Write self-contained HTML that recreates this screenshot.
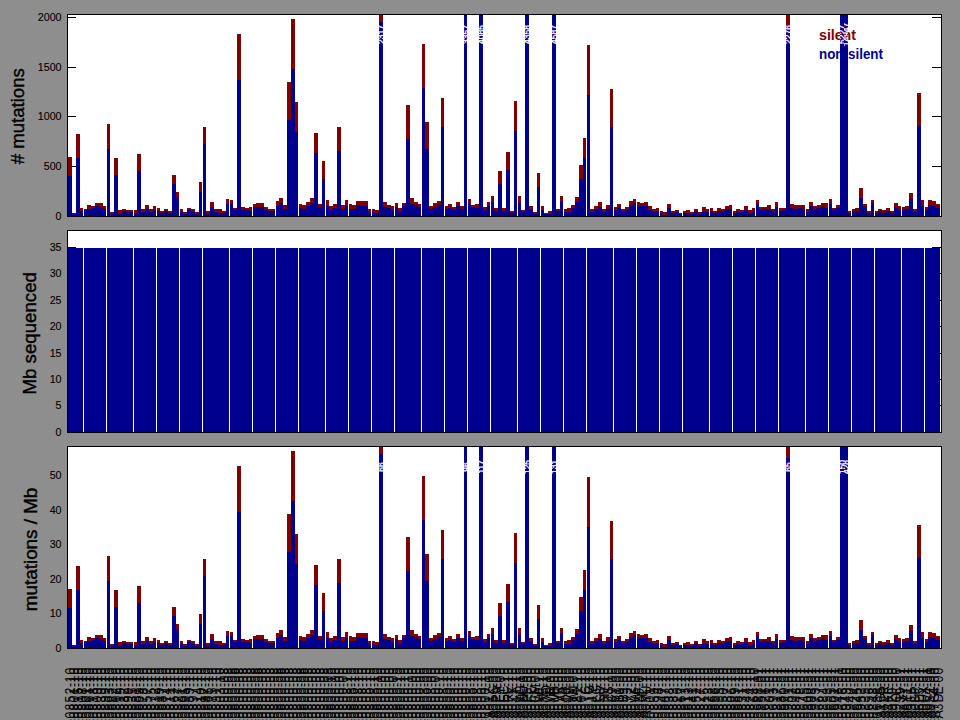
<!DOCTYPE html><html><head><meta charset="utf-8"><title>mutation rates</title>
<style>html,body{margin:0;padding:0;background:#8e8e8e;overflow:hidden}svg{display:block}text{font-family:"Liberation Sans",sans-serif}</style></head><body>
<svg width="960" height="720" viewBox="0 0 960 720">
<rect x="0" y="0" width="960" height="720" fill="#8e8e8e"/>
<g shape-rendering="crispEdges">
<rect x="67" y="14" width="875" height="203" fill="#000"/>
<rect x="68" y="15" width="873" height="201" fill="#fff"/>
<rect x="68" y="17" width="8" height="1" fill="#000"/>
<rect x="932" y="17" width="9" height="1" fill="#000"/>
<rect x="68" y="67" width="8" height="1" fill="#000"/>
<rect x="932" y="67" width="9" height="1" fill="#000"/>
<rect x="68" y="116" width="8" height="1" fill="#000"/>
<rect x="932" y="116" width="9" height="1" fill="#000"/>
<rect x="68" y="166" width="8" height="1" fill="#000"/>
<rect x="932" y="166" width="9" height="1" fill="#000"/>
</g>
<text x="61.5" y="21.3" font-size="10.67" text-anchor="end" fill="#000" stroke="#000" stroke-width="0.1">2000</text>
<text x="61.5" y="71.3" font-size="10.67" text-anchor="end" fill="#000" stroke="#000" stroke-width="0.1">1500</text>
<text x="61.5" y="120.3" font-size="10.67" text-anchor="end" fill="#000" stroke="#000" stroke-width="0.1">1000</text>
<text x="61.5" y="170.3" font-size="10.67" text-anchor="end" fill="#000" stroke="#000" stroke-width="0.1">500</text>
<text x="61.5" y="220.3" font-size="10.67" text-anchor="end" fill="#000" stroke="#000" stroke-width="0.1">0</text>
<text transform="translate(24.3,116.2) rotate(-90)" font-size="18.7" text-anchor="middle" textLength="96.0" lengthAdjust="spacingAndGlyphs" fill="#000" stroke="#000" stroke-width="0.4"># mutations</text>
<g shape-rendering="crispEdges">
<rect x="68" y="176" width="4" height="40" fill="#00008f"/>
<rect x="68" y="157" width="4" height="19" fill="#800000"/>
<rect x="72" y="214" width="4" height="2" fill="#00008f"/>
<rect x="72" y="213" width="4" height="1" fill="#800000"/>
<rect x="76" y="158" width="4" height="58" fill="#00008f"/>
<rect x="76" y="134" width="4" height="24" fill="#800000"/>
<rect x="80" y="211" width="3" height="5" fill="#00008f"/>
<rect x="80" y="208" width="3" height="3" fill="#800000"/>
<rect x="84" y="210" width="3" height="6" fill="#00008f"/>
<rect x="84" y="209" width="3" height="1" fill="#800000"/>
<rect x="87" y="209" width="4" height="7" fill="#00008f"/>
<rect x="87" y="205" width="4" height="4" fill="#800000"/>
<rect x="91" y="208" width="4" height="8" fill="#00008f"/>
<rect x="91" y="206" width="4" height="2" fill="#800000"/>
<rect x="95" y="206" width="4" height="10" fill="#00008f"/>
<rect x="95" y="203" width="4" height="3" fill="#800000"/>
<rect x="99" y="207" width="4" height="9" fill="#00008f"/>
<rect x="99" y="203" width="4" height="4" fill="#800000"/>
<rect x="103" y="209" width="3" height="7" fill="#00008f"/>
<rect x="103" y="206" width="3" height="3" fill="#800000"/>
<rect x="107" y="149" width="3" height="67" fill="#00008f"/>
<rect x="107" y="124" width="3" height="25" fill="#800000"/>
<rect x="110" y="214" width="4" height="2" fill="#00008f"/>
<rect x="110" y="212" width="4" height="2" fill="#800000"/>
<rect x="114" y="175" width="4" height="41" fill="#00008f"/>
<rect x="114" y="158" width="4" height="17" fill="#800000"/>
<rect x="118" y="213" width="4" height="3" fill="#00008f"/>
<rect x="118" y="210" width="4" height="3" fill="#800000"/>
<rect x="122" y="211" width="4" height="5" fill="#00008f"/>
<rect x="122" y="209" width="4" height="2" fill="#800000"/>
<rect x="126" y="212" width="4" height="4" fill="#00008f"/>
<rect x="126" y="210" width="4" height="2" fill="#800000"/>
<rect x="130" y="212" width="3" height="4" fill="#00008f"/>
<rect x="130" y="210" width="3" height="2" fill="#800000"/>
<rect x="134" y="213" width="3" height="3" fill="#00008f"/>
<rect x="134" y="210" width="3" height="3" fill="#800000"/>
<rect x="137" y="171" width="4" height="45" fill="#00008f"/>
<rect x="137" y="154" width="4" height="17" fill="#800000"/>
<rect x="141" y="212" width="4" height="4" fill="#00008f"/>
<rect x="141" y="209" width="4" height="3" fill="#800000"/>
<rect x="145" y="209" width="4" height="7" fill="#00008f"/>
<rect x="145" y="205" width="4" height="4" fill="#800000"/>
<rect x="149" y="212" width="4" height="4" fill="#00008f"/>
<rect x="149" y="209" width="4" height="3" fill="#800000"/>
<rect x="153" y="209" width="3" height="7" fill="#00008f"/>
<rect x="153" y="206" width="3" height="3" fill="#800000"/>
<rect x="157" y="211" width="3" height="5" fill="#00008f"/>
<rect x="157" y="208" width="3" height="3" fill="#800000"/>
<rect x="160" y="213" width="4" height="3" fill="#00008f"/>
<rect x="160" y="211" width="4" height="2" fill="#800000"/>
<rect x="164" y="211" width="4" height="5" fill="#00008f"/>
<rect x="164" y="209" width="4" height="2" fill="#800000"/>
<rect x="168" y="213" width="4" height="3" fill="#00008f"/>
<rect x="168" y="211" width="4" height="2" fill="#800000"/>
<rect x="172" y="184" width="4" height="32" fill="#00008f"/>
<rect x="172" y="175" width="4" height="9" fill="#800000"/>
<rect x="176" y="198" width="3" height="18" fill="#00008f"/>
<rect x="176" y="192" width="3" height="6" fill="#800000"/>
<rect x="180" y="212" width="3" height="4" fill="#00008f"/>
<rect x="180" y="209" width="3" height="3" fill="#800000"/>
<rect x="183" y="214" width="4" height="2" fill="#00008f"/>
<rect x="183" y="212" width="4" height="2" fill="#800000"/>
<rect x="187" y="210" width="4" height="6" fill="#00008f"/>
<rect x="187" y="208" width="4" height="2" fill="#800000"/>
<rect x="191" y="212" width="4" height="4" fill="#00008f"/>
<rect x="191" y="209" width="4" height="3" fill="#800000"/>
<rect x="195" y="214" width="4" height="2" fill="#00008f"/>
<rect x="195" y="212" width="4" height="2" fill="#800000"/>
<rect x="199" y="192" width="3" height="24" fill="#00008f"/>
<rect x="199" y="182" width="3" height="10" fill="#800000"/>
<rect x="203" y="144" width="3" height="72" fill="#00008f"/>
<rect x="203" y="127" width="3" height="17" fill="#800000"/>
<rect x="206" y="214" width="4" height="2" fill="#00008f"/>
<rect x="206" y="211" width="4" height="3" fill="#800000"/>
<rect x="210" y="207" width="4" height="9" fill="#00008f"/>
<rect x="210" y="202" width="4" height="5" fill="#800000"/>
<rect x="214" y="212" width="4" height="4" fill="#00008f"/>
<rect x="214" y="209" width="4" height="3" fill="#800000"/>
<rect x="218" y="213" width="4" height="3" fill="#00008f"/>
<rect x="218" y="209" width="4" height="4" fill="#800000"/>
<rect x="222" y="213" width="4" height="3" fill="#00008f"/>
<rect x="222" y="211" width="4" height="2" fill="#800000"/>
<rect x="226" y="204" width="3" height="12" fill="#00008f"/>
<rect x="226" y="199" width="3" height="5" fill="#800000"/>
<rect x="230" y="204" width="3" height="12" fill="#00008f"/>
<rect x="230" y="200" width="3" height="4" fill="#800000"/>
<rect x="233" y="210" width="4" height="6" fill="#00008f"/>
<rect x="233" y="208" width="4" height="2" fill="#800000"/>
<rect x="237" y="80" width="4" height="136" fill="#00008f"/>
<rect x="237" y="34" width="4" height="46" fill="#800000"/>
<rect x="241" y="210" width="4" height="6" fill="#00008f"/>
<rect x="241" y="207" width="4" height="3" fill="#800000"/>
<rect x="245" y="210" width="4" height="6" fill="#00008f"/>
<rect x="245" y="208" width="4" height="2" fill="#800000"/>
<rect x="249" y="211" width="3" height="5" fill="#00008f"/>
<rect x="249" y="207" width="3" height="4" fill="#800000"/>
<rect x="253" y="207" width="3" height="9" fill="#00008f"/>
<rect x="253" y="204" width="3" height="3" fill="#800000"/>
<rect x="256" y="207" width="4" height="9" fill="#00008f"/>
<rect x="256" y="203" width="4" height="4" fill="#800000"/>
<rect x="260" y="207" width="4" height="9" fill="#00008f"/>
<rect x="260" y="203" width="4" height="4" fill="#800000"/>
<rect x="264" y="210" width="4" height="6" fill="#00008f"/>
<rect x="264" y="207" width="4" height="3" fill="#800000"/>
<rect x="268" y="211" width="4" height="5" fill="#00008f"/>
<rect x="268" y="209" width="4" height="2" fill="#800000"/>
<rect x="272" y="211" width="3" height="5" fill="#00008f"/>
<rect x="272" y="209" width="3" height="2" fill="#800000"/>
<rect x="276" y="206" width="3" height="10" fill="#00008f"/>
<rect x="276" y="201" width="3" height="5" fill="#800000"/>
<rect x="279" y="203" width="4" height="13" fill="#00008f"/>
<rect x="279" y="198" width="4" height="5" fill="#800000"/>
<rect x="283" y="209" width="4" height="7" fill="#00008f"/>
<rect x="283" y="205" width="4" height="4" fill="#800000"/>
<rect x="287" y="120" width="4" height="96" fill="#00008f"/>
<rect x="287" y="82" width="4" height="38" fill="#800000"/>
<rect x="291" y="69" width="4" height="147" fill="#00008f"/>
<rect x="291" y="19" width="4" height="50" fill="#800000"/>
<rect x="295" y="132" width="3" height="84" fill="#00008f"/>
<rect x="295" y="102" width="3" height="30" fill="#800000"/>
<rect x="299" y="208" width="3" height="8" fill="#00008f"/>
<rect x="299" y="204" width="3" height="4" fill="#800000"/>
<rect x="302" y="209" width="4" height="7" fill="#00008f"/>
<rect x="302" y="205" width="4" height="4" fill="#800000"/>
<rect x="306" y="206" width="4" height="10" fill="#00008f"/>
<rect x="306" y="202" width="4" height="4" fill="#800000"/>
<rect x="310" y="203" width="4" height="13" fill="#00008f"/>
<rect x="310" y="198" width="4" height="5" fill="#800000"/>
<rect x="314" y="153" width="4" height="63" fill="#00008f"/>
<rect x="314" y="133" width="4" height="20" fill="#800000"/>
<rect x="318" y="207" width="4" height="9" fill="#00008f"/>
<rect x="318" y="204" width="4" height="3" fill="#800000"/>
<rect x="322" y="179" width="3" height="37" fill="#00008f"/>
<rect x="322" y="161" width="3" height="18" fill="#800000"/>
<rect x="326" y="206" width="3" height="10" fill="#00008f"/>
<rect x="326" y="200" width="3" height="6" fill="#800000"/>
<rect x="329" y="210" width="4" height="6" fill="#00008f"/>
<rect x="329" y="206" width="4" height="4" fill="#800000"/>
<rect x="333" y="208" width="4" height="8" fill="#00008f"/>
<rect x="333" y="204" width="4" height="4" fill="#800000"/>
<rect x="337" y="151" width="4" height="65" fill="#00008f"/>
<rect x="337" y="127" width="4" height="24" fill="#800000"/>
<rect x="341" y="209" width="4" height="7" fill="#00008f"/>
<rect x="341" y="205" width="4" height="4" fill="#800000"/>
<rect x="345" y="206" width="3" height="10" fill="#00008f"/>
<rect x="345" y="200" width="3" height="6" fill="#800000"/>
<rect x="349" y="209" width="3" height="7" fill="#00008f"/>
<rect x="349" y="204" width="3" height="5" fill="#800000"/>
<rect x="352" y="209" width="4" height="7" fill="#00008f"/>
<rect x="352" y="205" width="4" height="4" fill="#800000"/>
<rect x="356" y="205" width="4" height="11" fill="#00008f"/>
<rect x="356" y="201" width="4" height="4" fill="#800000"/>
<rect x="360" y="206" width="4" height="10" fill="#00008f"/>
<rect x="360" y="201" width="4" height="5" fill="#800000"/>
<rect x="364" y="206" width="4" height="10" fill="#00008f"/>
<rect x="364" y="201" width="4" height="5" fill="#800000"/>
<rect x="368" y="212" width="3" height="4" fill="#00008f"/>
<rect x="368" y="209" width="3" height="3" fill="#800000"/>
<rect x="372" y="212" width="3" height="4" fill="#00008f"/>
<rect x="372" y="209" width="3" height="3" fill="#800000"/>
<rect x="375" y="213" width="4" height="3" fill="#00008f"/>
<rect x="375" y="210" width="4" height="3" fill="#800000"/>
<rect x="379" y="22" width="4" height="194" fill="#00008f"/>
<rect x="379" y="15" width="4" height="7" fill="#800000"/>
<rect x="383" y="207" width="4" height="9" fill="#00008f"/>
<rect x="383" y="202" width="4" height="5" fill="#800000"/>
<rect x="387" y="208" width="4" height="8" fill="#00008f"/>
<rect x="387" y="205" width="4" height="3" fill="#800000"/>
<rect x="391" y="210" width="3" height="6" fill="#00008f"/>
<rect x="391" y="206" width="3" height="4" fill="#800000"/>
<rect x="395" y="207" width="3" height="9" fill="#00008f"/>
<rect x="395" y="203" width="3" height="4" fill="#800000"/>
<rect x="398" y="212" width="4" height="4" fill="#00008f"/>
<rect x="398" y="208" width="4" height="4" fill="#800000"/>
<rect x="402" y="206" width="4" height="10" fill="#00008f"/>
<rect x="402" y="203" width="4" height="3" fill="#800000"/>
<rect x="406" y="139" width="4" height="77" fill="#00008f"/>
<rect x="406" y="105" width="4" height="34" fill="#800000"/>
<rect x="410" y="204" width="4" height="12" fill="#00008f"/>
<rect x="410" y="198" width="4" height="6" fill="#800000"/>
<rect x="414" y="205" width="4" height="11" fill="#00008f"/>
<rect x="414" y="202" width="4" height="3" fill="#800000"/>
<rect x="418" y="207" width="3" height="9" fill="#00008f"/>
<rect x="418" y="204" width="3" height="3" fill="#800000"/>
<rect x="422" y="88" width="3" height="128" fill="#00008f"/>
<rect x="422" y="44" width="3" height="44" fill="#800000"/>
<rect x="425" y="149" width="4" height="67" fill="#00008f"/>
<rect x="425" y="122" width="4" height="27" fill="#800000"/>
<rect x="429" y="209" width="4" height="7" fill="#00008f"/>
<rect x="429" y="206" width="4" height="3" fill="#800000"/>
<rect x="433" y="207" width="4" height="9" fill="#00008f"/>
<rect x="433" y="203" width="4" height="4" fill="#800000"/>
<rect x="437" y="205" width="4" height="11" fill="#00008f"/>
<rect x="437" y="201" width="4" height="4" fill="#800000"/>
<rect x="441" y="127" width="3" height="89" fill="#00008f"/>
<rect x="441" y="98" width="3" height="29" fill="#800000"/>
<rect x="445" y="209" width="3" height="7" fill="#00008f"/>
<rect x="445" y="206" width="3" height="3" fill="#800000"/>
<rect x="448" y="208" width="4" height="8" fill="#00008f"/>
<rect x="448" y="204" width="4" height="4" fill="#800000"/>
<rect x="452" y="210" width="4" height="6" fill="#00008f"/>
<rect x="452" y="207" width="4" height="3" fill="#800000"/>
<rect x="456" y="206" width="4" height="10" fill="#00008f"/>
<rect x="456" y="202" width="4" height="4" fill="#800000"/>
<rect x="460" y="209" width="4" height="7" fill="#00008f"/>
<rect x="460" y="206" width="4" height="3" fill="#800000"/>
<rect x="464" y="15" width="3" height="201" fill="#00008f"/>
<rect x="468" y="204" width="3" height="12" fill="#00008f"/>
<rect x="468" y="199" width="3" height="5" fill="#800000"/>
<rect x="471" y="207" width="4" height="9" fill="#00008f"/>
<rect x="471" y="205" width="4" height="2" fill="#800000"/>
<rect x="475" y="208" width="4" height="8" fill="#00008f"/>
<rect x="475" y="204" width="4" height="4" fill="#800000"/>
<rect x="479" y="15" width="4" height="201" fill="#00008f"/>
<rect x="483" y="210" width="4" height="6" fill="#00008f"/>
<rect x="483" y="207" width="4" height="3" fill="#800000"/>
<rect x="487" y="206" width="3" height="10" fill="#00008f"/>
<rect x="487" y="202" width="3" height="4" fill="#800000"/>
<rect x="491" y="202" width="3" height="14" fill="#00008f"/>
<rect x="491" y="196" width="3" height="6" fill="#800000"/>
<rect x="494" y="211" width="4" height="5" fill="#00008f"/>
<rect x="494" y="208" width="4" height="3" fill="#800000"/>
<rect x="498" y="184" width="4" height="32" fill="#00008f"/>
<rect x="498" y="171" width="4" height="13" fill="#800000"/>
<rect x="502" y="211" width="4" height="5" fill="#00008f"/>
<rect x="502" y="208" width="4" height="3" fill="#800000"/>
<rect x="506" y="170" width="4" height="46" fill="#00008f"/>
<rect x="506" y="152" width="4" height="18" fill="#800000"/>
<rect x="510" y="213" width="4" height="3" fill="#00008f"/>
<rect x="510" y="211" width="4" height="2" fill="#800000"/>
<rect x="514" y="131" width="3" height="85" fill="#00008f"/>
<rect x="514" y="101" width="3" height="30" fill="#800000"/>
<rect x="518" y="203" width="3" height="13" fill="#00008f"/>
<rect x="518" y="196" width="3" height="7" fill="#800000"/>
<rect x="521" y="212" width="4" height="4" fill="#00008f"/>
<rect x="521" y="210" width="4" height="2" fill="#800000"/>
<rect x="525" y="15" width="4" height="201" fill="#00008f"/>
<rect x="529" y="210" width="4" height="6" fill="#00008f"/>
<rect x="529" y="206" width="4" height="4" fill="#800000"/>
<rect x="533" y="214" width="4" height="2" fill="#00008f"/>
<rect x="533" y="212" width="4" height="2" fill="#800000"/>
<rect x="537" y="187" width="3" height="29" fill="#00008f"/>
<rect x="537" y="173" width="3" height="14" fill="#800000"/>
<rect x="541" y="210" width="3" height="6" fill="#00008f"/>
<rect x="541" y="206" width="3" height="4" fill="#800000"/>
<rect x="544" y="214" width="4" height="2" fill="#00008f"/>
<rect x="544" y="213" width="4" height="1" fill="#800000"/>
<rect x="548" y="214" width="4" height="2" fill="#00008f"/>
<rect x="548" y="211" width="4" height="3" fill="#800000"/>
<rect x="552" y="15" width="4" height="201" fill="#00008f"/>
<rect x="556" y="211" width="4" height="5" fill="#00008f"/>
<rect x="556" y="209" width="4" height="2" fill="#800000"/>
<rect x="560" y="201" width="3" height="15" fill="#00008f"/>
<rect x="560" y="196" width="3" height="5" fill="#800000"/>
<rect x="564" y="212" width="3" height="4" fill="#00008f"/>
<rect x="564" y="209" width="3" height="3" fill="#800000"/>
<rect x="567" y="212" width="4" height="4" fill="#00008f"/>
<rect x="567" y="208" width="4" height="4" fill="#800000"/>
<rect x="571" y="208" width="4" height="8" fill="#00008f"/>
<rect x="571" y="205" width="4" height="3" fill="#800000"/>
<rect x="575" y="202" width="4" height="14" fill="#00008f"/>
<rect x="575" y="197" width="4" height="5" fill="#800000"/>
<rect x="579" y="179" width="4" height="37" fill="#00008f"/>
<rect x="579" y="165" width="4" height="14" fill="#800000"/>
<rect x="583" y="158" width="3" height="58" fill="#00008f"/>
<rect x="583" y="138" width="3" height="20" fill="#800000"/>
<rect x="587" y="95" width="3" height="121" fill="#00008f"/>
<rect x="587" y="45" width="3" height="50" fill="#800000"/>
<rect x="590" y="212" width="4" height="4" fill="#00008f"/>
<rect x="590" y="209" width="4" height="3" fill="#800000"/>
<rect x="594" y="209" width="4" height="7" fill="#00008f"/>
<rect x="594" y="206" width="4" height="3" fill="#800000"/>
<rect x="598" y="207" width="4" height="9" fill="#00008f"/>
<rect x="598" y="202" width="4" height="5" fill="#800000"/>
<rect x="602" y="212" width="4" height="4" fill="#00008f"/>
<rect x="602" y="209" width="4" height="3" fill="#800000"/>
<rect x="606" y="209" width="4" height="7" fill="#00008f"/>
<rect x="606" y="205" width="4" height="4" fill="#800000"/>
<rect x="610" y="127" width="3" height="89" fill="#00008f"/>
<rect x="610" y="89" width="3" height="38" fill="#800000"/>
<rect x="614" y="210" width="3" height="6" fill="#00008f"/>
<rect x="614" y="207" width="3" height="3" fill="#800000"/>
<rect x="617" y="208" width="4" height="8" fill="#00008f"/>
<rect x="617" y="204" width="4" height="4" fill="#800000"/>
<rect x="621" y="212" width="4" height="4" fill="#00008f"/>
<rect x="621" y="209" width="4" height="3" fill="#800000"/>
<rect x="625" y="210" width="4" height="6" fill="#00008f"/>
<rect x="625" y="207" width="4" height="3" fill="#800000"/>
<rect x="629" y="205" width="4" height="11" fill="#00008f"/>
<rect x="629" y="201" width="4" height="4" fill="#800000"/>
<rect x="633" y="203" width="3" height="13" fill="#00008f"/>
<rect x="633" y="199" width="3" height="4" fill="#800000"/>
<rect x="637" y="206" width="3" height="10" fill="#00008f"/>
<rect x="637" y="202" width="3" height="4" fill="#800000"/>
<rect x="640" y="206" width="4" height="10" fill="#00008f"/>
<rect x="640" y="203" width="4" height="3" fill="#800000"/>
<rect x="644" y="206" width="4" height="10" fill="#00008f"/>
<rect x="644" y="202" width="4" height="4" fill="#800000"/>
<rect x="648" y="210" width="4" height="6" fill="#00008f"/>
<rect x="648" y="206" width="4" height="4" fill="#800000"/>
<rect x="652" y="212" width="4" height="4" fill="#00008f"/>
<rect x="652" y="209" width="4" height="3" fill="#800000"/>
<rect x="656" y="211" width="3" height="5" fill="#00008f"/>
<rect x="656" y="208" width="3" height="3" fill="#800000"/>
<rect x="660" y="213" width="3" height="3" fill="#00008f"/>
<rect x="660" y="211" width="3" height="2" fill="#800000"/>
<rect x="663" y="215" width="4" height="1" fill="#00008f"/>
<rect x="663" y="212" width="4" height="3" fill="#800000"/>
<rect x="667" y="208" width="4" height="8" fill="#00008f"/>
<rect x="667" y="204" width="4" height="4" fill="#800000"/>
<rect x="671" y="213" width="4" height="3" fill="#00008f"/>
<rect x="671" y="211" width="4" height="2" fill="#800000"/>
<rect x="675" y="212" width="4" height="4" fill="#00008f"/>
<rect x="675" y="210" width="4" height="2" fill="#800000"/>
<rect x="679" y="214" width="3" height="2" fill="#00008f"/>
<rect x="679" y="213" width="3" height="1" fill="#800000"/>
<rect x="683" y="213" width="3" height="3" fill="#00008f"/>
<rect x="683" y="211" width="3" height="2" fill="#800000"/>
<rect x="686" y="213" width="4" height="3" fill="#00008f"/>
<rect x="686" y="210" width="4" height="3" fill="#800000"/>
<rect x="690" y="214" width="4" height="2" fill="#00008f"/>
<rect x="690" y="212" width="4" height="2" fill="#800000"/>
<rect x="694" y="211" width="4" height="5" fill="#00008f"/>
<rect x="694" y="209" width="4" height="2" fill="#800000"/>
<rect x="698" y="214" width="4" height="2" fill="#00008f"/>
<rect x="698" y="212" width="4" height="2" fill="#800000"/>
<rect x="702" y="212" width="4" height="4" fill="#00008f"/>
<rect x="702" y="207" width="4" height="5" fill="#800000"/>
<rect x="706" y="212" width="3" height="4" fill="#00008f"/>
<rect x="706" y="209" width="3" height="3" fill="#800000"/>
<rect x="710" y="211" width="3" height="5" fill="#00008f"/>
<rect x="710" y="208" width="3" height="3" fill="#800000"/>
<rect x="713" y="213" width="4" height="3" fill="#00008f"/>
<rect x="713" y="211" width="4" height="2" fill="#800000"/>
<rect x="717" y="211" width="4" height="5" fill="#00008f"/>
<rect x="717" y="208" width="4" height="3" fill="#800000"/>
<rect x="721" y="211" width="4" height="5" fill="#00008f"/>
<rect x="721" y="209" width="4" height="2" fill="#800000"/>
<rect x="725" y="209" width="4" height="7" fill="#00008f"/>
<rect x="725" y="206" width="4" height="3" fill="#800000"/>
<rect x="729" y="209" width="3" height="7" fill="#00008f"/>
<rect x="729" y="205" width="3" height="4" fill="#800000"/>
<rect x="733" y="213" width="3" height="3" fill="#00008f"/>
<rect x="733" y="211" width="3" height="2" fill="#800000"/>
<rect x="736" y="212" width="4" height="4" fill="#00008f"/>
<rect x="736" y="209" width="4" height="3" fill="#800000"/>
<rect x="740" y="212" width="4" height="4" fill="#00008f"/>
<rect x="740" y="210" width="4" height="2" fill="#800000"/>
<rect x="744" y="210" width="4" height="6" fill="#00008f"/>
<rect x="744" y="206" width="4" height="4" fill="#800000"/>
<rect x="748" y="213" width="4" height="3" fill="#00008f"/>
<rect x="748" y="210" width="4" height="3" fill="#800000"/>
<rect x="752" y="211" width="3" height="5" fill="#00008f"/>
<rect x="752" y="208" width="3" height="3" fill="#800000"/>
<rect x="756" y="204" width="3" height="12" fill="#00008f"/>
<rect x="756" y="200" width="3" height="4" fill="#800000"/>
<rect x="759" y="210" width="4" height="6" fill="#00008f"/>
<rect x="759" y="207" width="4" height="3" fill="#800000"/>
<rect x="763" y="209" width="4" height="7" fill="#00008f"/>
<rect x="763" y="207" width="4" height="2" fill="#800000"/>
<rect x="767" y="209" width="4" height="7" fill="#00008f"/>
<rect x="767" y="205" width="4" height="4" fill="#800000"/>
<rect x="771" y="211" width="4" height="5" fill="#00008f"/>
<rect x="771" y="209" width="4" height="2" fill="#800000"/>
<rect x="775" y="207" width="3" height="9" fill="#00008f"/>
<rect x="775" y="202" width="3" height="5" fill="#800000"/>
<rect x="779" y="211" width="3" height="5" fill="#00008f"/>
<rect x="779" y="208" width="3" height="3" fill="#800000"/>
<rect x="782" y="210" width="4" height="6" fill="#00008f"/>
<rect x="782" y="208" width="4" height="2" fill="#800000"/>
<rect x="786" y="26" width="4" height="190" fill="#00008f"/>
<rect x="786" y="15" width="4" height="11" fill="#800000"/>
<rect x="790" y="208" width="4" height="8" fill="#00008f"/>
<rect x="790" y="204" width="4" height="4" fill="#800000"/>
<rect x="794" y="209" width="4" height="7" fill="#00008f"/>
<rect x="794" y="205" width="4" height="4" fill="#800000"/>
<rect x="798" y="208" width="4" height="8" fill="#00008f"/>
<rect x="798" y="205" width="4" height="3" fill="#800000"/>
<rect x="802" y="209" width="3" height="7" fill="#00008f"/>
<rect x="802" y="205" width="3" height="4" fill="#800000"/>
<rect x="806" y="212" width="3" height="4" fill="#00008f"/>
<rect x="806" y="209" width="3" height="3" fill="#800000"/>
<rect x="809" y="206" width="4" height="10" fill="#00008f"/>
<rect x="809" y="202" width="4" height="4" fill="#800000"/>
<rect x="813" y="209" width="4" height="7" fill="#00008f"/>
<rect x="813" y="206" width="4" height="3" fill="#800000"/>
<rect x="817" y="208" width="4" height="8" fill="#00008f"/>
<rect x="817" y="205" width="4" height="3" fill="#800000"/>
<rect x="821" y="207" width="4" height="9" fill="#00008f"/>
<rect x="821" y="203" width="4" height="4" fill="#800000"/>
<rect x="825" y="208" width="3" height="8" fill="#00008f"/>
<rect x="825" y="203" width="3" height="5" fill="#800000"/>
<rect x="829" y="204" width="3" height="12" fill="#00008f"/>
<rect x="829" y="199" width="3" height="5" fill="#800000"/>
<rect x="832" y="210" width="4" height="6" fill="#00008f"/>
<rect x="832" y="208" width="4" height="2" fill="#800000"/>
<rect x="836" y="208" width="4" height="8" fill="#00008f"/>
<rect x="836" y="205" width="4" height="3" fill="#800000"/>
<rect x="840" y="15" width="4" height="201" fill="#00008f"/>
<rect x="844" y="15" width="4" height="201" fill="#00008f"/>
<rect x="848" y="213" width="3" height="3" fill="#00008f"/>
<rect x="848" y="211" width="3" height="2" fill="#800000"/>
<rect x="852" y="211" width="3" height="5" fill="#00008f"/>
<rect x="852" y="209" width="3" height="2" fill="#800000"/>
<rect x="855" y="211" width="4" height="5" fill="#00008f"/>
<rect x="855" y="208" width="4" height="3" fill="#800000"/>
<rect x="859" y="198" width="4" height="18" fill="#00008f"/>
<rect x="859" y="188" width="4" height="10" fill="#800000"/>
<rect x="863" y="207" width="4" height="9" fill="#00008f"/>
<rect x="863" y="204" width="4" height="3" fill="#800000"/>
<rect x="867" y="213" width="4" height="3" fill="#00008f"/>
<rect x="867" y="211" width="4" height="2" fill="#800000"/>
<rect x="871" y="203" width="3" height="13" fill="#00008f"/>
<rect x="871" y="200" width="3" height="3" fill="#800000"/>
<rect x="875" y="213" width="3" height="3" fill="#00008f"/>
<rect x="875" y="211" width="3" height="2" fill="#800000"/>
<rect x="878" y="211" width="4" height="5" fill="#00008f"/>
<rect x="878" y="209" width="4" height="2" fill="#800000"/>
<rect x="882" y="213" width="4" height="3" fill="#00008f"/>
<rect x="882" y="210" width="4" height="3" fill="#800000"/>
<rect x="886" y="211" width="4" height="5" fill="#00008f"/>
<rect x="886" y="208" width="4" height="3" fill="#800000"/>
<rect x="890" y="213" width="4" height="3" fill="#00008f"/>
<rect x="890" y="211" width="4" height="2" fill="#800000"/>
<rect x="894" y="207" width="4" height="9" fill="#00008f"/>
<rect x="894" y="203" width="4" height="4" fill="#800000"/>
<rect x="898" y="210" width="3" height="6" fill="#00008f"/>
<rect x="898" y="206" width="3" height="4" fill="#800000"/>
<rect x="902" y="210" width="3" height="6" fill="#00008f"/>
<rect x="902" y="207" width="3" height="3" fill="#800000"/>
<rect x="905" y="209" width="4" height="7" fill="#00008f"/>
<rect x="905" y="206" width="4" height="3" fill="#800000"/>
<rect x="909" y="199" width="4" height="17" fill="#00008f"/>
<rect x="909" y="193" width="4" height="6" fill="#800000"/>
<rect x="913" y="212" width="4" height="4" fill="#00008f"/>
<rect x="913" y="209" width="4" height="3" fill="#800000"/>
<rect x="917" y="126" width="4" height="90" fill="#00008f"/>
<rect x="917" y="93" width="4" height="33" fill="#800000"/>
<rect x="921" y="206" width="3" height="10" fill="#00008f"/>
<rect x="921" y="200" width="3" height="6" fill="#800000"/>
<rect x="925" y="210" width="3" height="6" fill="#00008f"/>
<rect x="925" y="207" width="3" height="3" fill="#800000"/>
<rect x="928" y="205" width="4" height="11" fill="#00008f"/>
<rect x="928" y="200" width="4" height="5" fill="#800000"/>
<rect x="932" y="206" width="4" height="10" fill="#00008f"/>
<rect x="932" y="201" width="4" height="5" fill="#800000"/>
<rect x="936" y="208" width="4" height="8" fill="#00008f"/>
<rect x="936" y="204" width="4" height="4" fill="#800000"/>
</g>
<text x="819" y="39.6" font-size="14" font-weight="bold" textLength="37" lengthAdjust="spacingAndGlyphs" fill="#800000">silent</text>
<text x="819" y="59.4" font-size="14" font-weight="bold" textLength="64" lengthAdjust="spacingAndGlyphs" fill="#00008f">non-silent</text>
<clipPath id="c82"><rect x="379" y="15" width="4" height="60"/></clipPath>
<g clip-path="url(#c82)"><text transform="translate(384.0,34.5) rotate(-90)" font-size="8.5" text-anchor="middle" fill="#fff" stroke="#fff" stroke-width="0.3">2317</text></g>
<clipPath id="c104"><rect x="464" y="15" width="3" height="60"/></clipPath>
<g clip-path="url(#c104)"><text transform="translate(468.5,34.5) rotate(-90)" font-size="8.5" text-anchor="middle" fill="#fff" stroke="#fff" stroke-width="0.3">3357</text></g>
<clipPath id="c108"><rect x="479" y="15" width="4" height="60"/></clipPath>
<g clip-path="url(#c108)"><text transform="translate(484.0,34.5) rotate(-90)" font-size="8.5" text-anchor="middle" fill="#fff" stroke="#fff" stroke-width="0.3">4085</text></g>
<clipPath id="c120"><rect x="525" y="15" width="4" height="60"/></clipPath>
<g clip-path="url(#c120)"><text transform="translate(530.0,34.5) rotate(-90)" font-size="8.5" text-anchor="middle" fill="#fff" stroke="#fff" stroke-width="0.3">4358</text></g>
<clipPath id="c127"><rect x="552" y="15" width="4" height="60"/></clipPath>
<g clip-path="url(#c127)"><text transform="translate(557.0,34.5) rotate(-90)" font-size="8.5" text-anchor="middle" fill="#fff" stroke="#fff" stroke-width="0.3">4587</text></g>
<clipPath id="c188"><rect x="786" y="15" width="4" height="60"/></clipPath>
<g clip-path="url(#c188)"><text transform="translate(791.0,34.5) rotate(-90)" font-size="8.5" text-anchor="middle" fill="#fff" stroke="#fff" stroke-width="0.3">2276</text></g>
<clipPath id="c202"><rect x="840" y="15" width="4" height="60"/></clipPath>
<g clip-path="url(#c202)"><text transform="translate(845.0,34.5) rotate(-90)" font-size="8.5" text-anchor="middle" fill="#fff" stroke="#fff" stroke-width="0.3">5227</text></g>
<clipPath id="c203"><rect x="844" y="15" width="4" height="60"/></clipPath>
<g clip-path="url(#c203)"><text transform="translate(849.0,34.5) rotate(-90)" font-size="8.5" text-anchor="middle" fill="#fff" stroke="#fff" stroke-width="0.3">14947</text></g>
<g shape-rendering="crispEdges">
<rect x="67" y="230" width="875" height="203" fill="#000"/>
<rect x="68" y="231" width="873" height="201" fill="#fff"/>
<rect x="68" y="247" width="8" height="1" fill="#000"/>
<rect x="932" y="247" width="9" height="1" fill="#000"/>
<rect x="68" y="273" width="8" height="1" fill="#000"/>
<rect x="932" y="273" width="9" height="1" fill="#000"/>
<rect x="68" y="300" width="8" height="1" fill="#000"/>
<rect x="932" y="300" width="9" height="1" fill="#000"/>
<rect x="68" y="326" width="8" height="1" fill="#000"/>
<rect x="932" y="326" width="9" height="1" fill="#000"/>
<rect x="68" y="353" width="8" height="1" fill="#000"/>
<rect x="932" y="353" width="9" height="1" fill="#000"/>
<rect x="68" y="379" width="8" height="1" fill="#000"/>
<rect x="932" y="379" width="9" height="1" fill="#000"/>
<rect x="68" y="405" width="8" height="1" fill="#000"/>
<rect x="932" y="405" width="9" height="1" fill="#000"/>
</g>
<text x="61.5" y="251.3" font-size="10.67" text-anchor="end" fill="#000" stroke="#000" stroke-width="0.1">35</text>
<text x="61.5" y="277.3" font-size="10.67" text-anchor="end" fill="#000" stroke="#000" stroke-width="0.1">30</text>
<text x="61.5" y="304.3" font-size="10.67" text-anchor="end" fill="#000" stroke="#000" stroke-width="0.1">25</text>
<text x="61.5" y="330.3" font-size="10.67" text-anchor="end" fill="#000" stroke="#000" stroke-width="0.1">20</text>
<text x="61.5" y="357.3" font-size="10.67" text-anchor="end" fill="#000" stroke="#000" stroke-width="0.1">15</text>
<text x="61.5" y="383.3" font-size="10.67" text-anchor="end" fill="#000" stroke="#000" stroke-width="0.1">10</text>
<text x="61.5" y="409.3" font-size="10.67" text-anchor="end" fill="#000" stroke="#000" stroke-width="0.1">5</text>
<text x="61.5" y="436.3" font-size="10.67" text-anchor="end" fill="#000" stroke="#000" stroke-width="0.1">0</text>
<text transform="translate(36.0,333.3) rotate(-90)" font-size="18.7" text-anchor="middle" textLength="122.5" lengthAdjust="spacingAndGlyphs" fill="#000" stroke="#000" stroke-width="0.4">Mb sequenced</text>
<g shape-rendering="crispEdges">
<rect x="68" y="248" width="872" height="184" fill="#00008f"/>
<rect x="83" y="248" width="1" height="184" fill="#fff"/>
<rect x="106" y="248" width="1" height="184" fill="#fff"/>
<rect x="133" y="248" width="1" height="184" fill="#fff"/>
<rect x="156" y="248" width="1" height="184" fill="#fff"/>
<rect x="179" y="248" width="1" height="184" fill="#fff"/>
<rect x="202" y="248" width="1" height="184" fill="#fff"/>
<rect x="229" y="248" width="1" height="184" fill="#fff"/>
<rect x="252" y="248" width="1" height="184" fill="#fff"/>
<rect x="275" y="248" width="1" height="184" fill="#fff"/>
<rect x="298" y="248" width="1" height="184" fill="#fff"/>
<rect x="325" y="248" width="1" height="184" fill="#fff"/>
<rect x="348" y="248" width="1" height="184" fill="#fff"/>
<rect x="371" y="248" width="1" height="184" fill="#fff"/>
<rect x="394" y="248" width="1" height="184" fill="#fff"/>
<rect x="421" y="248" width="1" height="184" fill="#fff"/>
<rect x="444" y="248" width="1" height="184" fill="#fff"/>
<rect x="467" y="248" width="1" height="184" fill="#fff"/>
<rect x="490" y="248" width="1" height="184" fill="#fff"/>
<rect x="517" y="248" width="1" height="184" fill="#fff"/>
<rect x="540" y="248" width="1" height="184" fill="#fff"/>
<rect x="563" y="248" width="1" height="184" fill="#fff"/>
<rect x="586" y="248" width="1" height="184" fill="#fff"/>
<rect x="613" y="248" width="1" height="184" fill="#fff"/>
<rect x="636" y="248" width="1" height="184" fill="#fff"/>
<rect x="659" y="248" width="1" height="184" fill="#fff"/>
<rect x="682" y="248" width="1" height="184" fill="#fff"/>
<rect x="709" y="248" width="1" height="184" fill="#fff"/>
<rect x="732" y="248" width="1" height="184" fill="#fff"/>
<rect x="755" y="248" width="1" height="184" fill="#fff"/>
<rect x="778" y="248" width="1" height="184" fill="#fff"/>
<rect x="805" y="248" width="1" height="184" fill="#fff"/>
<rect x="828" y="248" width="1" height="184" fill="#fff"/>
<rect x="851" y="248" width="1" height="184" fill="#fff"/>
<rect x="874" y="248" width="1" height="184" fill="#fff"/>
<rect x="901" y="248" width="1" height="184" fill="#fff"/>
<rect x="924" y="248" width="1" height="184" fill="#fff"/>
</g>
<g shape-rendering="crispEdges">
<rect x="67" y="446" width="875" height="203" fill="#000"/>
<rect x="68" y="447" width="873" height="201" fill="#fff"/>
</g>
<text x="61.5" y="479.3" font-size="10.67" text-anchor="end" fill="#000" stroke="#000" stroke-width="0.1">50</text>
<text x="61.5" y="514.3" font-size="10.67" text-anchor="end" fill="#000" stroke="#000" stroke-width="0.1">40</text>
<text x="61.5" y="548.3" font-size="10.67" text-anchor="end" fill="#000" stroke="#000" stroke-width="0.1">30</text>
<text x="61.5" y="583.3" font-size="10.67" text-anchor="end" fill="#000" stroke="#000" stroke-width="0.1">20</text>
<text x="61.5" y="617.3" font-size="10.67" text-anchor="end" fill="#000" stroke="#000" stroke-width="0.1">10</text>
<text x="61.5" y="652.3" font-size="10.67" text-anchor="end" fill="#000" stroke="#000" stroke-width="0.1">0</text>
<text transform="translate(36.6,549.4) rotate(-90)" font-size="18.7" text-anchor="middle" textLength="123.5" lengthAdjust="spacingAndGlyphs" fill="#000" stroke="#000" stroke-width="0.4">mutations / Mb</text>
<g shape-rendering="crispEdges">
<rect x="68" y="608" width="4" height="40" fill="#00008f"/>
<rect x="68" y="589" width="4" height="19" fill="#800000"/>
<rect x="72" y="646" width="4" height="2" fill="#00008f"/>
<rect x="72" y="645" width="4" height="1" fill="#800000"/>
<rect x="76" y="590" width="4" height="58" fill="#00008f"/>
<rect x="76" y="566" width="4" height="24" fill="#800000"/>
<rect x="80" y="643" width="3" height="5" fill="#00008f"/>
<rect x="80" y="640" width="3" height="3" fill="#800000"/>
<rect x="84" y="642" width="3" height="6" fill="#00008f"/>
<rect x="84" y="641" width="3" height="1" fill="#800000"/>
<rect x="87" y="641" width="4" height="7" fill="#00008f"/>
<rect x="87" y="637" width="4" height="4" fill="#800000"/>
<rect x="91" y="640" width="4" height="8" fill="#00008f"/>
<rect x="91" y="638" width="4" height="2" fill="#800000"/>
<rect x="95" y="638" width="4" height="10" fill="#00008f"/>
<rect x="95" y="635" width="4" height="3" fill="#800000"/>
<rect x="99" y="639" width="4" height="9" fill="#00008f"/>
<rect x="99" y="635" width="4" height="4" fill="#800000"/>
<rect x="103" y="641" width="3" height="7" fill="#00008f"/>
<rect x="103" y="638" width="3" height="3" fill="#800000"/>
<rect x="107" y="581" width="3" height="67" fill="#00008f"/>
<rect x="107" y="556" width="3" height="25" fill="#800000"/>
<rect x="110" y="646" width="4" height="2" fill="#00008f"/>
<rect x="110" y="644" width="4" height="2" fill="#800000"/>
<rect x="114" y="607" width="4" height="41" fill="#00008f"/>
<rect x="114" y="590" width="4" height="17" fill="#800000"/>
<rect x="118" y="645" width="4" height="3" fill="#00008f"/>
<rect x="118" y="642" width="4" height="3" fill="#800000"/>
<rect x="122" y="643" width="4" height="5" fill="#00008f"/>
<rect x="122" y="641" width="4" height="2" fill="#800000"/>
<rect x="126" y="644" width="4" height="4" fill="#00008f"/>
<rect x="126" y="642" width="4" height="2" fill="#800000"/>
<rect x="130" y="644" width="3" height="4" fill="#00008f"/>
<rect x="130" y="642" width="3" height="2" fill="#800000"/>
<rect x="134" y="645" width="3" height="3" fill="#00008f"/>
<rect x="134" y="642" width="3" height="3" fill="#800000"/>
<rect x="137" y="603" width="4" height="45" fill="#00008f"/>
<rect x="137" y="586" width="4" height="17" fill="#800000"/>
<rect x="141" y="644" width="4" height="4" fill="#00008f"/>
<rect x="141" y="641" width="4" height="3" fill="#800000"/>
<rect x="145" y="641" width="4" height="7" fill="#00008f"/>
<rect x="145" y="637" width="4" height="4" fill="#800000"/>
<rect x="149" y="644" width="4" height="4" fill="#00008f"/>
<rect x="149" y="641" width="4" height="3" fill="#800000"/>
<rect x="153" y="641" width="3" height="7" fill="#00008f"/>
<rect x="153" y="638" width="3" height="3" fill="#800000"/>
<rect x="157" y="643" width="3" height="5" fill="#00008f"/>
<rect x="157" y="640" width="3" height="3" fill="#800000"/>
<rect x="160" y="645" width="4" height="3" fill="#00008f"/>
<rect x="160" y="643" width="4" height="2" fill="#800000"/>
<rect x="164" y="643" width="4" height="5" fill="#00008f"/>
<rect x="164" y="641" width="4" height="2" fill="#800000"/>
<rect x="168" y="645" width="4" height="3" fill="#00008f"/>
<rect x="168" y="643" width="4" height="2" fill="#800000"/>
<rect x="172" y="616" width="4" height="32" fill="#00008f"/>
<rect x="172" y="607" width="4" height="9" fill="#800000"/>
<rect x="176" y="630" width="3" height="18" fill="#00008f"/>
<rect x="176" y="624" width="3" height="6" fill="#800000"/>
<rect x="180" y="644" width="3" height="4" fill="#00008f"/>
<rect x="180" y="641" width="3" height="3" fill="#800000"/>
<rect x="183" y="646" width="4" height="2" fill="#00008f"/>
<rect x="183" y="644" width="4" height="2" fill="#800000"/>
<rect x="187" y="642" width="4" height="6" fill="#00008f"/>
<rect x="187" y="640" width="4" height="2" fill="#800000"/>
<rect x="191" y="644" width="4" height="4" fill="#00008f"/>
<rect x="191" y="641" width="4" height="3" fill="#800000"/>
<rect x="195" y="646" width="4" height="2" fill="#00008f"/>
<rect x="195" y="644" width="4" height="2" fill="#800000"/>
<rect x="199" y="624" width="3" height="24" fill="#00008f"/>
<rect x="199" y="614" width="3" height="10" fill="#800000"/>
<rect x="203" y="576" width="3" height="72" fill="#00008f"/>
<rect x="203" y="559" width="3" height="17" fill="#800000"/>
<rect x="206" y="646" width="4" height="2" fill="#00008f"/>
<rect x="206" y="643" width="4" height="3" fill="#800000"/>
<rect x="210" y="639" width="4" height="9" fill="#00008f"/>
<rect x="210" y="634" width="4" height="5" fill="#800000"/>
<rect x="214" y="644" width="4" height="4" fill="#00008f"/>
<rect x="214" y="641" width="4" height="3" fill="#800000"/>
<rect x="218" y="645" width="4" height="3" fill="#00008f"/>
<rect x="218" y="641" width="4" height="4" fill="#800000"/>
<rect x="222" y="645" width="4" height="3" fill="#00008f"/>
<rect x="222" y="643" width="4" height="2" fill="#800000"/>
<rect x="226" y="636" width="3" height="12" fill="#00008f"/>
<rect x="226" y="631" width="3" height="5" fill="#800000"/>
<rect x="230" y="636" width="3" height="12" fill="#00008f"/>
<rect x="230" y="632" width="3" height="4" fill="#800000"/>
<rect x="233" y="642" width="4" height="6" fill="#00008f"/>
<rect x="233" y="640" width="4" height="2" fill="#800000"/>
<rect x="237" y="512" width="4" height="136" fill="#00008f"/>
<rect x="237" y="466" width="4" height="46" fill="#800000"/>
<rect x="241" y="642" width="4" height="6" fill="#00008f"/>
<rect x="241" y="639" width="4" height="3" fill="#800000"/>
<rect x="245" y="642" width="4" height="6" fill="#00008f"/>
<rect x="245" y="640" width="4" height="2" fill="#800000"/>
<rect x="249" y="643" width="3" height="5" fill="#00008f"/>
<rect x="249" y="639" width="3" height="4" fill="#800000"/>
<rect x="253" y="639" width="3" height="9" fill="#00008f"/>
<rect x="253" y="636" width="3" height="3" fill="#800000"/>
<rect x="256" y="639" width="4" height="9" fill="#00008f"/>
<rect x="256" y="635" width="4" height="4" fill="#800000"/>
<rect x="260" y="639" width="4" height="9" fill="#00008f"/>
<rect x="260" y="635" width="4" height="4" fill="#800000"/>
<rect x="264" y="642" width="4" height="6" fill="#00008f"/>
<rect x="264" y="639" width="4" height="3" fill="#800000"/>
<rect x="268" y="643" width="4" height="5" fill="#00008f"/>
<rect x="268" y="641" width="4" height="2" fill="#800000"/>
<rect x="272" y="643" width="3" height="5" fill="#00008f"/>
<rect x="272" y="641" width="3" height="2" fill="#800000"/>
<rect x="276" y="638" width="3" height="10" fill="#00008f"/>
<rect x="276" y="633" width="3" height="5" fill="#800000"/>
<rect x="279" y="635" width="4" height="13" fill="#00008f"/>
<rect x="279" y="630" width="4" height="5" fill="#800000"/>
<rect x="283" y="641" width="4" height="7" fill="#00008f"/>
<rect x="283" y="637" width="4" height="4" fill="#800000"/>
<rect x="287" y="552" width="4" height="96" fill="#00008f"/>
<rect x="287" y="514" width="4" height="38" fill="#800000"/>
<rect x="291" y="501" width="4" height="147" fill="#00008f"/>
<rect x="291" y="451" width="4" height="50" fill="#800000"/>
<rect x="295" y="564" width="3" height="84" fill="#00008f"/>
<rect x="295" y="534" width="3" height="30" fill="#800000"/>
<rect x="299" y="640" width="3" height="8" fill="#00008f"/>
<rect x="299" y="636" width="3" height="4" fill="#800000"/>
<rect x="302" y="641" width="4" height="7" fill="#00008f"/>
<rect x="302" y="637" width="4" height="4" fill="#800000"/>
<rect x="306" y="638" width="4" height="10" fill="#00008f"/>
<rect x="306" y="634" width="4" height="4" fill="#800000"/>
<rect x="310" y="635" width="4" height="13" fill="#00008f"/>
<rect x="310" y="630" width="4" height="5" fill="#800000"/>
<rect x="314" y="585" width="4" height="63" fill="#00008f"/>
<rect x="314" y="565" width="4" height="20" fill="#800000"/>
<rect x="318" y="639" width="4" height="9" fill="#00008f"/>
<rect x="318" y="636" width="4" height="3" fill="#800000"/>
<rect x="322" y="611" width="3" height="37" fill="#00008f"/>
<rect x="322" y="593" width="3" height="18" fill="#800000"/>
<rect x="326" y="638" width="3" height="10" fill="#00008f"/>
<rect x="326" y="632" width="3" height="6" fill="#800000"/>
<rect x="329" y="642" width="4" height="6" fill="#00008f"/>
<rect x="329" y="638" width="4" height="4" fill="#800000"/>
<rect x="333" y="640" width="4" height="8" fill="#00008f"/>
<rect x="333" y="636" width="4" height="4" fill="#800000"/>
<rect x="337" y="583" width="4" height="65" fill="#00008f"/>
<rect x="337" y="559" width="4" height="24" fill="#800000"/>
<rect x="341" y="641" width="4" height="7" fill="#00008f"/>
<rect x="341" y="637" width="4" height="4" fill="#800000"/>
<rect x="345" y="638" width="3" height="10" fill="#00008f"/>
<rect x="345" y="632" width="3" height="6" fill="#800000"/>
<rect x="349" y="641" width="3" height="7" fill="#00008f"/>
<rect x="349" y="636" width="3" height="5" fill="#800000"/>
<rect x="352" y="641" width="4" height="7" fill="#00008f"/>
<rect x="352" y="637" width="4" height="4" fill="#800000"/>
<rect x="356" y="637" width="4" height="11" fill="#00008f"/>
<rect x="356" y="633" width="4" height="4" fill="#800000"/>
<rect x="360" y="638" width="4" height="10" fill="#00008f"/>
<rect x="360" y="633" width="4" height="5" fill="#800000"/>
<rect x="364" y="638" width="4" height="10" fill="#00008f"/>
<rect x="364" y="633" width="4" height="5" fill="#800000"/>
<rect x="368" y="644" width="3" height="4" fill="#00008f"/>
<rect x="368" y="641" width="3" height="3" fill="#800000"/>
<rect x="372" y="644" width="3" height="4" fill="#00008f"/>
<rect x="372" y="641" width="3" height="3" fill="#800000"/>
<rect x="375" y="645" width="4" height="3" fill="#00008f"/>
<rect x="375" y="642" width="4" height="3" fill="#800000"/>
<rect x="379" y="454" width="4" height="194" fill="#00008f"/>
<rect x="379" y="447" width="4" height="7" fill="#800000"/>
<rect x="383" y="639" width="4" height="9" fill="#00008f"/>
<rect x="383" y="634" width="4" height="5" fill="#800000"/>
<rect x="387" y="640" width="4" height="8" fill="#00008f"/>
<rect x="387" y="637" width="4" height="3" fill="#800000"/>
<rect x="391" y="642" width="3" height="6" fill="#00008f"/>
<rect x="391" y="638" width="3" height="4" fill="#800000"/>
<rect x="395" y="639" width="3" height="9" fill="#00008f"/>
<rect x="395" y="635" width="3" height="4" fill="#800000"/>
<rect x="398" y="644" width="4" height="4" fill="#00008f"/>
<rect x="398" y="640" width="4" height="4" fill="#800000"/>
<rect x="402" y="638" width="4" height="10" fill="#00008f"/>
<rect x="402" y="635" width="4" height="3" fill="#800000"/>
<rect x="406" y="571" width="4" height="77" fill="#00008f"/>
<rect x="406" y="537" width="4" height="34" fill="#800000"/>
<rect x="410" y="636" width="4" height="12" fill="#00008f"/>
<rect x="410" y="630" width="4" height="6" fill="#800000"/>
<rect x="414" y="637" width="4" height="11" fill="#00008f"/>
<rect x="414" y="634" width="4" height="3" fill="#800000"/>
<rect x="418" y="639" width="3" height="9" fill="#00008f"/>
<rect x="418" y="636" width="3" height="3" fill="#800000"/>
<rect x="422" y="520" width="3" height="128" fill="#00008f"/>
<rect x="422" y="476" width="3" height="44" fill="#800000"/>
<rect x="425" y="581" width="4" height="67" fill="#00008f"/>
<rect x="425" y="554" width="4" height="27" fill="#800000"/>
<rect x="429" y="641" width="4" height="7" fill="#00008f"/>
<rect x="429" y="638" width="4" height="3" fill="#800000"/>
<rect x="433" y="639" width="4" height="9" fill="#00008f"/>
<rect x="433" y="635" width="4" height="4" fill="#800000"/>
<rect x="437" y="637" width="4" height="11" fill="#00008f"/>
<rect x="437" y="633" width="4" height="4" fill="#800000"/>
<rect x="441" y="559" width="3" height="89" fill="#00008f"/>
<rect x="441" y="530" width="3" height="29" fill="#800000"/>
<rect x="445" y="641" width="3" height="7" fill="#00008f"/>
<rect x="445" y="638" width="3" height="3" fill="#800000"/>
<rect x="448" y="640" width="4" height="8" fill="#00008f"/>
<rect x="448" y="636" width="4" height="4" fill="#800000"/>
<rect x="452" y="642" width="4" height="6" fill="#00008f"/>
<rect x="452" y="639" width="4" height="3" fill="#800000"/>
<rect x="456" y="638" width="4" height="10" fill="#00008f"/>
<rect x="456" y="634" width="4" height="4" fill="#800000"/>
<rect x="460" y="641" width="4" height="7" fill="#00008f"/>
<rect x="460" y="638" width="4" height="3" fill="#800000"/>
<rect x="464" y="447" width="3" height="201" fill="#00008f"/>
<rect x="468" y="636" width="3" height="12" fill="#00008f"/>
<rect x="468" y="631" width="3" height="5" fill="#800000"/>
<rect x="471" y="639" width="4" height="9" fill="#00008f"/>
<rect x="471" y="637" width="4" height="2" fill="#800000"/>
<rect x="475" y="640" width="4" height="8" fill="#00008f"/>
<rect x="475" y="636" width="4" height="4" fill="#800000"/>
<rect x="479" y="447" width="4" height="201" fill="#00008f"/>
<rect x="483" y="642" width="4" height="6" fill="#00008f"/>
<rect x="483" y="639" width="4" height="3" fill="#800000"/>
<rect x="487" y="638" width="3" height="10" fill="#00008f"/>
<rect x="487" y="634" width="3" height="4" fill="#800000"/>
<rect x="491" y="634" width="3" height="14" fill="#00008f"/>
<rect x="491" y="628" width="3" height="6" fill="#800000"/>
<rect x="494" y="643" width="4" height="5" fill="#00008f"/>
<rect x="494" y="640" width="4" height="3" fill="#800000"/>
<rect x="498" y="616" width="4" height="32" fill="#00008f"/>
<rect x="498" y="603" width="4" height="13" fill="#800000"/>
<rect x="502" y="643" width="4" height="5" fill="#00008f"/>
<rect x="502" y="640" width="4" height="3" fill="#800000"/>
<rect x="506" y="602" width="4" height="46" fill="#00008f"/>
<rect x="506" y="584" width="4" height="18" fill="#800000"/>
<rect x="510" y="645" width="4" height="3" fill="#00008f"/>
<rect x="510" y="643" width="4" height="2" fill="#800000"/>
<rect x="514" y="563" width="3" height="85" fill="#00008f"/>
<rect x="514" y="533" width="3" height="30" fill="#800000"/>
<rect x="518" y="635" width="3" height="13" fill="#00008f"/>
<rect x="518" y="628" width="3" height="7" fill="#800000"/>
<rect x="521" y="644" width="4" height="4" fill="#00008f"/>
<rect x="521" y="642" width="4" height="2" fill="#800000"/>
<rect x="525" y="447" width="4" height="201" fill="#00008f"/>
<rect x="529" y="642" width="4" height="6" fill="#00008f"/>
<rect x="529" y="638" width="4" height="4" fill="#800000"/>
<rect x="533" y="646" width="4" height="2" fill="#00008f"/>
<rect x="533" y="644" width="4" height="2" fill="#800000"/>
<rect x="537" y="619" width="3" height="29" fill="#00008f"/>
<rect x="537" y="605" width="3" height="14" fill="#800000"/>
<rect x="541" y="642" width="3" height="6" fill="#00008f"/>
<rect x="541" y="638" width="3" height="4" fill="#800000"/>
<rect x="544" y="646" width="4" height="2" fill="#00008f"/>
<rect x="544" y="645" width="4" height="1" fill="#800000"/>
<rect x="548" y="646" width="4" height="2" fill="#00008f"/>
<rect x="548" y="643" width="4" height="3" fill="#800000"/>
<rect x="552" y="447" width="4" height="201" fill="#00008f"/>
<rect x="556" y="643" width="4" height="5" fill="#00008f"/>
<rect x="556" y="641" width="4" height="2" fill="#800000"/>
<rect x="560" y="633" width="3" height="15" fill="#00008f"/>
<rect x="560" y="628" width="3" height="5" fill="#800000"/>
<rect x="564" y="644" width="3" height="4" fill="#00008f"/>
<rect x="564" y="641" width="3" height="3" fill="#800000"/>
<rect x="567" y="644" width="4" height="4" fill="#00008f"/>
<rect x="567" y="640" width="4" height="4" fill="#800000"/>
<rect x="571" y="640" width="4" height="8" fill="#00008f"/>
<rect x="571" y="637" width="4" height="3" fill="#800000"/>
<rect x="575" y="634" width="4" height="14" fill="#00008f"/>
<rect x="575" y="629" width="4" height="5" fill="#800000"/>
<rect x="579" y="611" width="4" height="37" fill="#00008f"/>
<rect x="579" y="597" width="4" height="14" fill="#800000"/>
<rect x="583" y="590" width="3" height="58" fill="#00008f"/>
<rect x="583" y="570" width="3" height="20" fill="#800000"/>
<rect x="587" y="527" width="3" height="121" fill="#00008f"/>
<rect x="587" y="477" width="3" height="50" fill="#800000"/>
<rect x="590" y="644" width="4" height="4" fill="#00008f"/>
<rect x="590" y="641" width="4" height="3" fill="#800000"/>
<rect x="594" y="641" width="4" height="7" fill="#00008f"/>
<rect x="594" y="638" width="4" height="3" fill="#800000"/>
<rect x="598" y="639" width="4" height="9" fill="#00008f"/>
<rect x="598" y="634" width="4" height="5" fill="#800000"/>
<rect x="602" y="644" width="4" height="4" fill="#00008f"/>
<rect x="602" y="641" width="4" height="3" fill="#800000"/>
<rect x="606" y="641" width="4" height="7" fill="#00008f"/>
<rect x="606" y="637" width="4" height="4" fill="#800000"/>
<rect x="610" y="559" width="3" height="89" fill="#00008f"/>
<rect x="610" y="521" width="3" height="38" fill="#800000"/>
<rect x="614" y="642" width="3" height="6" fill="#00008f"/>
<rect x="614" y="639" width="3" height="3" fill="#800000"/>
<rect x="617" y="640" width="4" height="8" fill="#00008f"/>
<rect x="617" y="636" width="4" height="4" fill="#800000"/>
<rect x="621" y="644" width="4" height="4" fill="#00008f"/>
<rect x="621" y="641" width="4" height="3" fill="#800000"/>
<rect x="625" y="642" width="4" height="6" fill="#00008f"/>
<rect x="625" y="639" width="4" height="3" fill="#800000"/>
<rect x="629" y="637" width="4" height="11" fill="#00008f"/>
<rect x="629" y="633" width="4" height="4" fill="#800000"/>
<rect x="633" y="635" width="3" height="13" fill="#00008f"/>
<rect x="633" y="631" width="3" height="4" fill="#800000"/>
<rect x="637" y="638" width="3" height="10" fill="#00008f"/>
<rect x="637" y="634" width="3" height="4" fill="#800000"/>
<rect x="640" y="638" width="4" height="10" fill="#00008f"/>
<rect x="640" y="635" width="4" height="3" fill="#800000"/>
<rect x="644" y="638" width="4" height="10" fill="#00008f"/>
<rect x="644" y="634" width="4" height="4" fill="#800000"/>
<rect x="648" y="642" width="4" height="6" fill="#00008f"/>
<rect x="648" y="638" width="4" height="4" fill="#800000"/>
<rect x="652" y="644" width="4" height="4" fill="#00008f"/>
<rect x="652" y="641" width="4" height="3" fill="#800000"/>
<rect x="656" y="643" width="3" height="5" fill="#00008f"/>
<rect x="656" y="640" width="3" height="3" fill="#800000"/>
<rect x="660" y="645" width="3" height="3" fill="#00008f"/>
<rect x="660" y="643" width="3" height="2" fill="#800000"/>
<rect x="663" y="647" width="4" height="1" fill="#00008f"/>
<rect x="663" y="644" width="4" height="3" fill="#800000"/>
<rect x="667" y="640" width="4" height="8" fill="#00008f"/>
<rect x="667" y="636" width="4" height="4" fill="#800000"/>
<rect x="671" y="645" width="4" height="3" fill="#00008f"/>
<rect x="671" y="643" width="4" height="2" fill="#800000"/>
<rect x="675" y="644" width="4" height="4" fill="#00008f"/>
<rect x="675" y="642" width="4" height="2" fill="#800000"/>
<rect x="679" y="646" width="3" height="2" fill="#00008f"/>
<rect x="679" y="645" width="3" height="1" fill="#800000"/>
<rect x="683" y="645" width="3" height="3" fill="#00008f"/>
<rect x="683" y="643" width="3" height="2" fill="#800000"/>
<rect x="686" y="645" width="4" height="3" fill="#00008f"/>
<rect x="686" y="642" width="4" height="3" fill="#800000"/>
<rect x="690" y="646" width="4" height="2" fill="#00008f"/>
<rect x="690" y="644" width="4" height="2" fill="#800000"/>
<rect x="694" y="643" width="4" height="5" fill="#00008f"/>
<rect x="694" y="641" width="4" height="2" fill="#800000"/>
<rect x="698" y="646" width="4" height="2" fill="#00008f"/>
<rect x="698" y="644" width="4" height="2" fill="#800000"/>
<rect x="702" y="644" width="4" height="4" fill="#00008f"/>
<rect x="702" y="639" width="4" height="5" fill="#800000"/>
<rect x="706" y="644" width="3" height="4" fill="#00008f"/>
<rect x="706" y="641" width="3" height="3" fill="#800000"/>
<rect x="710" y="643" width="3" height="5" fill="#00008f"/>
<rect x="710" y="640" width="3" height="3" fill="#800000"/>
<rect x="713" y="645" width="4" height="3" fill="#00008f"/>
<rect x="713" y="643" width="4" height="2" fill="#800000"/>
<rect x="717" y="643" width="4" height="5" fill="#00008f"/>
<rect x="717" y="640" width="4" height="3" fill="#800000"/>
<rect x="721" y="643" width="4" height="5" fill="#00008f"/>
<rect x="721" y="641" width="4" height="2" fill="#800000"/>
<rect x="725" y="641" width="4" height="7" fill="#00008f"/>
<rect x="725" y="638" width="4" height="3" fill="#800000"/>
<rect x="729" y="641" width="3" height="7" fill="#00008f"/>
<rect x="729" y="637" width="3" height="4" fill="#800000"/>
<rect x="733" y="645" width="3" height="3" fill="#00008f"/>
<rect x="733" y="643" width="3" height="2" fill="#800000"/>
<rect x="736" y="644" width="4" height="4" fill="#00008f"/>
<rect x="736" y="641" width="4" height="3" fill="#800000"/>
<rect x="740" y="644" width="4" height="4" fill="#00008f"/>
<rect x="740" y="642" width="4" height="2" fill="#800000"/>
<rect x="744" y="642" width="4" height="6" fill="#00008f"/>
<rect x="744" y="638" width="4" height="4" fill="#800000"/>
<rect x="748" y="645" width="4" height="3" fill="#00008f"/>
<rect x="748" y="642" width="4" height="3" fill="#800000"/>
<rect x="752" y="643" width="3" height="5" fill="#00008f"/>
<rect x="752" y="640" width="3" height="3" fill="#800000"/>
<rect x="756" y="636" width="3" height="12" fill="#00008f"/>
<rect x="756" y="632" width="3" height="4" fill="#800000"/>
<rect x="759" y="642" width="4" height="6" fill="#00008f"/>
<rect x="759" y="639" width="4" height="3" fill="#800000"/>
<rect x="763" y="641" width="4" height="7" fill="#00008f"/>
<rect x="763" y="639" width="4" height="2" fill="#800000"/>
<rect x="767" y="641" width="4" height="7" fill="#00008f"/>
<rect x="767" y="637" width="4" height="4" fill="#800000"/>
<rect x="771" y="643" width="4" height="5" fill="#00008f"/>
<rect x="771" y="641" width="4" height="2" fill="#800000"/>
<rect x="775" y="639" width="3" height="9" fill="#00008f"/>
<rect x="775" y="634" width="3" height="5" fill="#800000"/>
<rect x="779" y="643" width="3" height="5" fill="#00008f"/>
<rect x="779" y="640" width="3" height="3" fill="#800000"/>
<rect x="782" y="642" width="4" height="6" fill="#00008f"/>
<rect x="782" y="640" width="4" height="2" fill="#800000"/>
<rect x="786" y="458" width="4" height="190" fill="#00008f"/>
<rect x="786" y="447" width="4" height="11" fill="#800000"/>
<rect x="790" y="640" width="4" height="8" fill="#00008f"/>
<rect x="790" y="636" width="4" height="4" fill="#800000"/>
<rect x="794" y="641" width="4" height="7" fill="#00008f"/>
<rect x="794" y="637" width="4" height="4" fill="#800000"/>
<rect x="798" y="640" width="4" height="8" fill="#00008f"/>
<rect x="798" y="637" width="4" height="3" fill="#800000"/>
<rect x="802" y="641" width="3" height="7" fill="#00008f"/>
<rect x="802" y="637" width="3" height="4" fill="#800000"/>
<rect x="806" y="644" width="3" height="4" fill="#00008f"/>
<rect x="806" y="641" width="3" height="3" fill="#800000"/>
<rect x="809" y="638" width="4" height="10" fill="#00008f"/>
<rect x="809" y="634" width="4" height="4" fill="#800000"/>
<rect x="813" y="641" width="4" height="7" fill="#00008f"/>
<rect x="813" y="638" width="4" height="3" fill="#800000"/>
<rect x="817" y="640" width="4" height="8" fill="#00008f"/>
<rect x="817" y="637" width="4" height="3" fill="#800000"/>
<rect x="821" y="639" width="4" height="9" fill="#00008f"/>
<rect x="821" y="635" width="4" height="4" fill="#800000"/>
<rect x="825" y="640" width="3" height="8" fill="#00008f"/>
<rect x="825" y="635" width="3" height="5" fill="#800000"/>
<rect x="829" y="636" width="3" height="12" fill="#00008f"/>
<rect x="829" y="631" width="3" height="5" fill="#800000"/>
<rect x="832" y="642" width="4" height="6" fill="#00008f"/>
<rect x="832" y="640" width="4" height="2" fill="#800000"/>
<rect x="836" y="640" width="4" height="8" fill="#00008f"/>
<rect x="836" y="637" width="4" height="3" fill="#800000"/>
<rect x="840" y="447" width="4" height="201" fill="#00008f"/>
<rect x="844" y="447" width="4" height="201" fill="#00008f"/>
<rect x="848" y="645" width="3" height="3" fill="#00008f"/>
<rect x="848" y="643" width="3" height="2" fill="#800000"/>
<rect x="852" y="643" width="3" height="5" fill="#00008f"/>
<rect x="852" y="641" width="3" height="2" fill="#800000"/>
<rect x="855" y="643" width="4" height="5" fill="#00008f"/>
<rect x="855" y="640" width="4" height="3" fill="#800000"/>
<rect x="859" y="630" width="4" height="18" fill="#00008f"/>
<rect x="859" y="620" width="4" height="10" fill="#800000"/>
<rect x="863" y="639" width="4" height="9" fill="#00008f"/>
<rect x="863" y="636" width="4" height="3" fill="#800000"/>
<rect x="867" y="645" width="4" height="3" fill="#00008f"/>
<rect x="867" y="643" width="4" height="2" fill="#800000"/>
<rect x="871" y="635" width="3" height="13" fill="#00008f"/>
<rect x="871" y="632" width="3" height="3" fill="#800000"/>
<rect x="875" y="645" width="3" height="3" fill="#00008f"/>
<rect x="875" y="643" width="3" height="2" fill="#800000"/>
<rect x="878" y="643" width="4" height="5" fill="#00008f"/>
<rect x="878" y="641" width="4" height="2" fill="#800000"/>
<rect x="882" y="645" width="4" height="3" fill="#00008f"/>
<rect x="882" y="642" width="4" height="3" fill="#800000"/>
<rect x="886" y="643" width="4" height="5" fill="#00008f"/>
<rect x="886" y="640" width="4" height="3" fill="#800000"/>
<rect x="890" y="645" width="4" height="3" fill="#00008f"/>
<rect x="890" y="643" width="4" height="2" fill="#800000"/>
<rect x="894" y="639" width="4" height="9" fill="#00008f"/>
<rect x="894" y="635" width="4" height="4" fill="#800000"/>
<rect x="898" y="642" width="3" height="6" fill="#00008f"/>
<rect x="898" y="638" width="3" height="4" fill="#800000"/>
<rect x="902" y="642" width="3" height="6" fill="#00008f"/>
<rect x="902" y="639" width="3" height="3" fill="#800000"/>
<rect x="905" y="641" width="4" height="7" fill="#00008f"/>
<rect x="905" y="638" width="4" height="3" fill="#800000"/>
<rect x="909" y="631" width="4" height="17" fill="#00008f"/>
<rect x="909" y="625" width="4" height="6" fill="#800000"/>
<rect x="913" y="644" width="4" height="4" fill="#00008f"/>
<rect x="913" y="641" width="4" height="3" fill="#800000"/>
<rect x="917" y="558" width="4" height="90" fill="#00008f"/>
<rect x="917" y="525" width="4" height="33" fill="#800000"/>
<rect x="921" y="638" width="3" height="10" fill="#00008f"/>
<rect x="921" y="632" width="3" height="6" fill="#800000"/>
<rect x="925" y="642" width="3" height="6" fill="#00008f"/>
<rect x="925" y="639" width="3" height="3" fill="#800000"/>
<rect x="928" y="637" width="4" height="11" fill="#00008f"/>
<rect x="928" y="632" width="4" height="5" fill="#800000"/>
<rect x="932" y="638" width="4" height="10" fill="#00008f"/>
<rect x="932" y="633" width="4" height="5" fill="#800000"/>
<rect x="936" y="640" width="4" height="8" fill="#00008f"/>
<rect x="936" y="636" width="4" height="4" fill="#800000"/>
</g>
<clipPath id="d82"><rect x="379" y="447" width="4" height="60"/></clipPath>
<g clip-path="url(#d82)"><text transform="translate(384.0,467) rotate(-90)" font-size="8.5" text-anchor="middle" fill="#fff" stroke="#fff" stroke-width="0.3">66</text></g>
<clipPath id="d104"><rect x="464" y="447" width="3" height="60"/></clipPath>
<g clip-path="url(#d104)"><text transform="translate(468.5,467) rotate(-90)" font-size="8.5" text-anchor="middle" fill="#fff" stroke="#fff" stroke-width="0.3">96</text></g>
<clipPath id="d108"><rect x="479" y="447" width="4" height="60"/></clipPath>
<g clip-path="url(#d108)"><text transform="translate(484.0,467) rotate(-90)" font-size="8.5" text-anchor="middle" fill="#fff" stroke="#fff" stroke-width="0.3">117</text></g>
<clipPath id="d120"><rect x="525" y="447" width="4" height="60"/></clipPath>
<g clip-path="url(#d120)"><text transform="translate(530.0,467) rotate(-90)" font-size="8.5" text-anchor="middle" fill="#fff" stroke="#fff" stroke-width="0.3">125</text></g>
<clipPath id="d127"><rect x="552" y="447" width="4" height="60"/></clipPath>
<g clip-path="url(#d127)"><text transform="translate(557.0,467) rotate(-90)" font-size="8.5" text-anchor="middle" fill="#fff" stroke="#fff" stroke-width="0.3">131</text></g>
<clipPath id="d188"><rect x="786" y="447" width="4" height="60"/></clipPath>
<g clip-path="url(#d188)"><text transform="translate(791.0,467) rotate(-90)" font-size="8.5" text-anchor="middle" fill="#fff" stroke="#fff" stroke-width="0.3">65</text></g>
<clipPath id="d202"><rect x="840" y="447" width="4" height="60"/></clipPath>
<g clip-path="url(#d202)"><text transform="translate(845.0,467) rotate(-90)" font-size="8.5" text-anchor="middle" fill="#fff" stroke="#fff" stroke-width="0.3">150</text></g>
<clipPath id="d203"><rect x="844" y="447" width="4" height="60"/></clipPath>
<g clip-path="url(#d203)"><text transform="translate(849.0,467) rotate(-90)" font-size="8.5" text-anchor="middle" fill="#fff" stroke="#fff" stroke-width="0.3">428</text></g>
<g font-size="14" fill="#000">
<text transform="translate(75.0,720) rotate(-90) scale(0.88,1)" x="-61.84 -52.75 -43.66 -34.57 -26.19 -20.94 -11.84 -3.47 1.79 10.88 19.97 29.06 37.44 42.70 51.79">TCGA-B6-0852-10</text>
<text transform="translate(79.0,720) rotate(-90) scale(0.88,1)" x="-61.84 -52.75 -43.66 -34.57 -26.19 -20.94 -11.84 -3.47 1.79 10.88 19.97 29.06 37.44 42.70 51.79">TCGA-C8-0801-10</text>
<text transform="translate(83.0,720) rotate(-90) scale(0.88,1)" x="-61.84 -52.75 -43.66 -34.57 -26.19 -20.94 -11.84 -3.47 1.79 10.88 19.97 29.06 37.44 42.70 51.79">TCGA-D8-0815-10</text>
<text transform="translate(86.5,720) rotate(-90) scale(0.88,1)" x="-61.84 -52.75 -43.66 -34.57 -26.19 -20.94 -11.84 -3.47 1.79 10.88 19.97 29.06 37.44 42.70 51.79">TCGA-A8-0808-10</text>
<text transform="translate(90.5,720) rotate(-90) scale(0.88,1)" x="-61.84 -52.75 -43.66 -34.57 -26.19 -20.94 -11.84 -3.47 1.79 10.88 19.97 29.06 37.44 42.70 51.79">TCGA-B6-0801-10</text>
<text transform="translate(94.0,720) rotate(-90) scale(0.88,1)" x="-61.84 -52.75 -43.66 -34.57 -26.19 -20.94 -11.84 -3.47 1.79 10.88 19.97 29.06 37.44 42.70 51.79">TCGA-A8-0861-10</text>
<text transform="translate(98.0,720) rotate(-90) scale(0.88,1)" x="-61.84 -52.75 -43.66 -34.57 -26.19 -20.94 -11.84 -3.47 1.79 10.88 19.97 29.06 37.44 42.70 51.79">TCGA-B6-0818-10</text>
<text transform="translate(102.0,720) rotate(-90) scale(0.88,1)" x="-61.84 -52.75 -43.66 -34.57 -26.19 -20.94 -11.84 -3.47 1.79 10.88 19.97 29.06 37.44 42.70 51.79">TCGA-A2-0809-10</text>
<text transform="translate(106.0,720) rotate(-90) scale(0.88,1)" x="-61.84 -52.75 -43.66 -34.57 -26.19 -20.94 -11.84 -3.47 1.79 10.88 19.97 29.06 37.44 42.70 51.79">TCGA-A1-0839-10</text>
<text transform="translate(109.5,720) rotate(-90) scale(0.88,1)" x="-61.84 -52.75 -43.66 -34.57 -26.19 -20.94 -11.84 -3.47 1.79 10.88 19.97 29.06 37.44 42.70 51.79">TCGA-B6-0899-10</text>
<text transform="translate(113.5,720) rotate(-90) scale(0.88,1)" x="-61.84 -52.75 -43.66 -34.57 -26.19 -20.94 -11.84 -3.47 1.79 10.88 19.97 29.06 37.44 42.70 51.79">TCGA-A1-0803-10</text>
<text transform="translate(117.0,720) rotate(-90) scale(0.88,1)" x="-61.84 -52.75 -43.66 -34.57 -26.19 -20.94 -11.84 -3.47 1.79 10.88 19.97 29.06 37.44 42.70 51.79">TCGA-AN-0882-10</text>
<text transform="translate(121.0,720) rotate(-90) scale(0.88,1)" x="-61.84 -52.75 -43.66 -34.57 -26.19 -20.94 -11.84 -3.47 1.79 10.88 19.97 29.06 37.44 42.70 51.79">TCGA-C8-0862-10</text>
<text transform="translate(125.0,720) rotate(-90) scale(0.88,1)" x="-61.84 -52.75 -43.66 -34.57 -26.19 -20.94 -11.84 -3.47 1.79 10.88 19.97 29.06 37.44 42.70 51.79">TCGA-AN-0819-10</text>
<text transform="translate(129.0,720) rotate(-90) scale(0.88,1)" x="-61.84 -52.75 -43.66 -34.57 -26.19 -20.94 -11.84 -3.47 1.79 10.88 19.97 29.06 37.44 42.70 51.79">TCGA-A2-0882-10</text>
<text transform="translate(133.0,720) rotate(-90) scale(0.88,1)" x="-61.84 -52.75 -43.66 -34.57 -26.19 -20.94 -11.84 -3.47 1.79 10.88 19.97 29.06 37.44 42.70 51.79">TCGA-E2-0899-10</text>
<text transform="translate(136.5,720) rotate(-90) scale(0.88,1)" x="-61.84 -52.75 -43.66 -34.57 -26.19 -20.94 -11.84 -3.47 1.79 10.88 19.97 29.06 37.44 42.70 51.79">TCGA-A2-0835-10</text>
<text transform="translate(140.5,720) rotate(-90) scale(0.88,1)" x="-61.84 -52.75 -43.66 -34.57 -26.19 -20.94 -11.84 -3.47 1.79 10.88 19.97 29.06 37.44 42.70 51.79">TCGA-D8-0881-10</text>
<text transform="translate(144.0,720) rotate(-90) scale(0.88,1)" x="-61.84 -52.75 -43.66 -34.57 -26.19 -20.94 -11.84 -3.47 1.79 10.88 19.97 29.06 37.44 42.70 51.79">TCGA-A8-0809-10</text>
<text transform="translate(148.0,720) rotate(-90) scale(0.88,1)" x="-61.84 -52.75 -43.66 -34.57 -26.19 -20.94 -11.84 -3.47 1.79 10.88 19.97 29.06 37.44 42.70 51.79">TCGA-B6-0878-10</text>
<text transform="translate(152.0,720) rotate(-90) scale(0.88,1)" x="-61.84 -52.75 -43.66 -34.57 -26.19 -20.94 -11.84 -3.47 1.79 10.88 19.97 29.06 37.44 42.70 51.79">TCGA-D8-0857-10</text>
<text transform="translate(156.0,720) rotate(-90) scale(0.88,1)" x="-61.84 -52.75 -43.66 -34.57 -26.19 -20.94 -11.84 -3.47 1.79 10.88 19.97 29.06 37.44 42.70 51.79">TCGA-AN-0875-10</text>
<text transform="translate(159.5,720) rotate(-90) scale(0.88,1)" x="-61.84 -52.75 -43.66 -34.57 -26.19 -20.94 -11.84 -3.47 1.79 10.88 19.97 29.06 37.44 42.70 51.79">TCGA-A8-0832-10</text>
<text transform="translate(163.5,720) rotate(-90) scale(0.88,1)" x="-61.84 -52.75 -43.66 -34.57 -26.19 -20.94 -11.84 -3.47 1.79 10.88 19.97 29.06 37.44 42.70 51.79">TCGA-AN-0819-10</text>
<text transform="translate(167.0,720) rotate(-90) scale(0.88,1)" x="-61.84 -52.75 -43.66 -34.57 -26.19 -20.94 -11.84 -3.47 1.79 10.88 19.97 29.06 37.44 42.70 51.79">TCGA-AO-0887-10</text>
<text transform="translate(171.0,720) rotate(-90) scale(0.88,1)" x="-61.84 -52.75 -43.66 -34.57 -26.19 -20.94 -11.84 -3.47 1.79 10.88 19.97 29.06 37.44 42.70 51.79">TCGA-D8-0874-10</text>
<text transform="translate(175.0,720) rotate(-90) scale(0.88,1)" x="-61.84 -52.75 -43.66 -34.57 -26.19 -20.94 -11.84 -3.47 1.79 10.88 19.97 29.06 37.44 42.70 51.79">TCGA-C8-0811-10</text>
<text transform="translate(179.0,720) rotate(-90) scale(0.88,1)" x="-61.84 -52.75 -43.66 -34.57 -26.19 -20.94 -11.84 -3.47 1.79 10.88 19.97 29.06 37.44 42.70 51.79">TCGA-AO-0862-10</text>
<text transform="translate(182.5,720) rotate(-90) scale(0.88,1)" x="-61.84 -52.75 -43.66 -34.57 -26.19 -20.94 -11.84 -3.47 1.79 10.88 19.97 29.06 37.44 42.70 51.79">TCGA-B6-0827-10</text>
<text transform="translate(186.5,720) rotate(-90) scale(0.88,1)" x="-61.84 -52.75 -43.66 -34.57 -26.19 -20.94 -11.84 -3.47 1.79 10.88 19.97 29.06 37.44 42.70 51.79">TCGA-C8-0801-10</text>
<text transform="translate(190.0,720) rotate(-90) scale(0.88,1)" x="-61.84 -52.75 -43.66 -34.57 -26.19 -20.94 -11.84 -3.47 1.79 10.88 19.97 29.06 37.44 42.70 51.79">TCGA-AO-0895-10</text>
<text transform="translate(194.0,720) rotate(-90) scale(0.88,1)" x="-61.84 -52.75 -43.66 -34.57 -26.19 -20.94 -11.84 -3.47 1.79 10.88 19.97 29.06 37.44 42.70 51.79">TCGA-BH-0859-10</text>
<text transform="translate(198.0,720) rotate(-90) scale(0.88,1)" x="-61.84 -52.75 -43.66 -34.57 -26.19 -20.94 -11.84 -3.47 1.79 10.88 19.97 29.06 37.44 42.70 51.79">TCGA-A2-0897-10</text>
<text transform="translate(202.0,720) rotate(-90) scale(0.88,1)" x="-61.84 -52.75 -43.66 -34.57 -26.19 -20.94 -11.84 -3.47 1.79 10.88 19.97 29.06 37.44 42.70 51.79">TCGA-BH-0814-10</text>
<text transform="translate(205.5,720) rotate(-90) scale(0.88,1)" x="-61.84 -52.75 -43.66 -34.57 -26.19 -20.94 -11.84 -3.47 1.79 10.88 19.97 29.06 37.44 42.70 51.79">TCGA-AN-0810-10</text>
<text transform="translate(209.5,720) rotate(-90) scale(0.88,1)" x="-61.84 -52.75 -43.66 -34.57 -26.19 -20.94 -11.84 -3.47 1.79 10.88 19.97 29.06 37.44 42.70 51.79">TCGA-AN-0897-10</text>
<text transform="translate(213.0,720) rotate(-90) scale(0.88,1)" x="-61.84 -52.75 -43.66 -34.57 -26.19 -20.94 -11.84 -3.47 1.79 10.88 19.97 29.06 37.44 42.70 51.79">TCGA-A1-0865-10</text>
<text transform="translate(217.0,720) rotate(-90) scale(0.88,1)" x="-61.84 -52.75 -43.66 -34.57 -26.19 -20.94 -11.84 -3.47 1.79 10.88 19.97 29.06 37.44 42.70 51.79">TCGA-A7-0875-10</text>
<text transform="translate(221.0,720) rotate(-90) scale(0.88,1)" x="-61.84 -52.75 -43.66 -34.57 -26.19 -20.94 -11.84 -3.47 1.79 10.88 19.97 29.06 37.44 42.70 51.79">TCGA-BH-0891-10</text>
<text transform="translate(225.0,720) rotate(-90) scale(0.88,1)" x="-61.84 -52.75 -43.66 -34.57 -26.19 -20.94 -11.84 -3.47 1.79 10.88 19.97 29.06 37.44 42.70 51.79">TCGA-AN-0803-10</text>
<text transform="translate(229.0,720) rotate(-90) scale(0.88,1)" x="-61.84 -52.75 -43.66 -34.57 -26.19 -20.94 -11.84 -3.47 1.79 10.88 19.97 29.06 37.44 42.70 51.79">TCGA-A7-0800-08</text>
<text transform="translate(232.5,720) rotate(-90) scale(0.88,1)" x="-61.84 -52.75 -43.66 -34.57 -26.19 -20.94 -11.84 -3.47 1.79 10.88 19.97 29.06 37.44 42.70 51.79">TCGA-A8-0800-08</text>
<text transform="translate(236.5,720) rotate(-90) scale(0.88,1)" x="-61.84 -52.75 -43.66 -34.57 -26.19 -20.94 -11.84 -3.47 1.79 10.88 19.97 29.06 37.44 42.70 51.79">TCGA-B6-0800-08</text>
<text transform="translate(240.0,720) rotate(-90) scale(0.88,1)" x="-61.84 -52.75 -43.66 -34.57 -26.19 -20.94 -11.84 -3.47 1.79 10.88 19.97 29.06 37.44 42.70 51.79">TCGA-B6-0800-08</text>
<text transform="translate(244.0,720) rotate(-90) scale(0.88,1)" x="-61.84 -52.75 -43.66 -34.57 -26.19 -20.94 -11.84 -3.47 1.79 10.88 19.97 29.06 37.44 42.70 51.79">TCGA-BH-0800-08</text>
<text transform="translate(248.0,720) rotate(-90) scale(0.88,1)" x="-61.84 -52.75 -43.66 -34.57 -26.19 -20.94 -11.84 -3.47 1.79 10.88 19.97 29.06 37.44 42.70 51.79">TCGA-A2-0800-08</text>
<text transform="translate(252.0,720) rotate(-90) scale(0.88,1)" x="-61.84 -52.75 -43.66 -34.57 -26.19 -20.94 -11.84 -3.47 1.79 10.88 19.97 29.06 37.44 42.70 51.79">TCGA-A7-0800-08</text>
<text transform="translate(255.5,720) rotate(-90) scale(0.88,1)" x="-61.84 -52.75 -43.66 -34.57 -26.19 -20.94 -11.84 -3.47 1.79 10.88 19.97 29.06 37.44 42.70 51.79">TCGA-BH-0800-08</text>
<text transform="translate(259.5,720) rotate(-90) scale(0.88,1)" x="-61.84 -52.75 -43.66 -34.57 -26.19 -20.94 -11.84 -3.47 1.79 10.88 19.97 29.06 37.44 42.70 51.79">TCGA-B6-0800-08</text>
<text transform="translate(263.0,720) rotate(-90) scale(0.88,1)" x="-61.84 -52.75 -43.66 -34.57 -26.19 -20.94 -11.84 -3.47 1.79 10.88 19.97 29.06 37.44 42.70 51.79">TCGA-C8-0800-08</text>
<text transform="translate(267.0,720) rotate(-90) scale(0.88,1)" x="-61.84 -52.75 -43.66 -34.57 -26.19 -20.94 -11.84 -3.47 1.79 10.88 19.97 29.06 37.44 42.70 51.79">TCGA-AN-0800-08</text>
<text transform="translate(271.0,720) rotate(-90) scale(0.88,1)" x="-61.84 -52.75 -43.66 -34.57 -26.19 -20.94 -11.84 -3.47 1.79 10.88 19.97 29.06 37.44 42.70 51.79">TCGA-A7-0800-08</text>
<text transform="translate(275.0,720) rotate(-90) scale(0.88,1)" x="-61.84 -52.75 -43.66 -34.57 -26.19 -20.94 -11.84 -3.47 1.79 10.88 19.97 29.06 37.44 42.70 51.79">TCGA-B6-0800-08</text>
<text transform="translate(278.5,720) rotate(-90) scale(0.88,1)" x="-61.84 -52.75 -43.66 -34.57 -26.19 -20.94 -11.84 -3.47 1.79 10.88 19.97 29.06 37.44 42.70 51.79">TCGA-C8-0800-08</text>
<text transform="translate(282.5,720) rotate(-90) scale(0.88,1)" x="-61.84 -52.75 -43.66 -34.57 -26.19 -20.94 -11.84 -3.47 1.79 10.88 19.97 29.06 37.44 42.70 51.79">TCGA-AN-0800-08</text>
<text transform="translate(286.0,720) rotate(-90) scale(0.88,1)" x="-61.84 -52.75 -43.66 -34.57 -26.19 -20.94 -11.84 -3.47 1.79 10.88 19.97 29.06 37.44 42.70 51.79">TCGA-B6-0800-08</text>
<text transform="translate(290.0,720) rotate(-90) scale(0.88,1)" x="-61.84 -52.75 -43.66 -34.57 -26.19 -20.94 -11.84 -3.47 1.79 10.88 19.97 29.06 37.44 42.70 51.79">TCGA-AO-0800-08</text>
<text transform="translate(294.0,720) rotate(-90) scale(0.88,1)" x="-61.84 -52.75 -43.66 -34.57 -26.19 -20.94 -11.84 -3.47 1.79 10.88 19.97 29.06 37.44 42.70 51.79">TCGA-E2-0800-08</text>
<text transform="translate(298.0,720) rotate(-90) scale(0.88,1)" x="-61.84 -52.75 -43.66 -34.57 -26.19 -20.94 -11.84 -3.47 1.79 10.88 19.97 29.06 37.44 42.70 51.79">TCGA-B6-0800-08</text>
<text transform="translate(301.5,720) rotate(-90) scale(0.88,1)" x="-61.84 -52.75 -43.66 -34.57 -26.19 -20.94 -11.84 -3.47 1.79 10.88 19.97 29.06 37.44 42.70 51.79">TCGA-A8-0800-08</text>
<text transform="translate(305.5,720) rotate(-90) scale(0.88,1)" x="-61.84 -52.75 -43.66 -34.57 -26.19 -20.94 -11.84 -3.47 1.79 10.88 19.97 29.06 37.44 42.70 51.79">TCGA-A7-0800-08</text>
<text transform="translate(309.0,720) rotate(-90) scale(0.88,1)" x="-61.84 -52.75 -43.66 -34.57 -26.19 -20.94 -11.84 -3.47 1.79 10.88 19.97 29.06 37.44 42.70 51.79">TCGA-A2-0800-08</text>
<text transform="translate(313.0,720) rotate(-90) scale(0.88,1)" x="-61.84 -52.75 -43.66 -34.57 -26.19 -20.94 -11.84 -3.47 1.79 10.88 19.97 29.06 37.44 42.70 51.79">TCGA-A7-0800-08</text>
<text transform="translate(317.0,720) rotate(-90) scale(0.88,1)" x="-61.84 -52.75 -43.66 -34.57 -26.19 -20.94 -11.84 -3.47 1.79 10.88 19.97 29.06 37.44 42.70 51.79">TCGA-A7-0800-08</text>
<text transform="translate(321.0,720) rotate(-90) scale(0.88,1)" x="-61.84 -52.75 -43.66 -34.57 -26.19 -20.94 -11.84 -3.47 1.79 10.88 19.97 29.06 37.44 42.70 51.79">TCGA-A8-0800-08</text>
<text transform="translate(325.0,720) rotate(-90) scale(0.88,1)" x="-61.84 -52.75 -43.66 -34.57 -26.19 -20.94 -11.84 -3.47 1.79 10.88 19.97 29.06 37.44 42.70 51.79">TCGA-E2-0800-08</text>
<text transform="translate(328.5,720) rotate(-90) scale(0.88,1)" x="-61.84 -52.75 -43.66 -34.57 -26.19 -20.94 -11.84 -3.47 1.79 10.88 19.97 29.06 37.44 42.70 51.79">TCGA-A8-0800-08</text>
<text transform="translate(332.5,720) rotate(-90) scale(0.88,1)" x="-61.84 -52.75 -43.66 -34.57 -26.19 -20.94 -11.84 -3.47 1.79 10.88 19.97 29.06 37.44 42.70 51.79">TCGA-A1-0800-08</text>
<text transform="translate(336.0,720) rotate(-90) scale(0.88,1)" x="-61.84 -52.75 -43.66 -34.57 -26.19 -20.94 -11.84 -3.47 1.79 10.88 19.97 29.06 37.44 42.70 51.79">TCGA-D8-0800-10</text>
<text transform="translate(340.0,720) rotate(-90) scale(0.88,1)" x="-61.84 -52.75 -43.66 -34.57 -26.19 -20.94 -11.84 -3.47 1.79 10.88 19.97 29.06 37.44 42.70 51.79">TCGA-AN-0800-00</text>
<text transform="translate(344.0,720) rotate(-90) scale(0.88,1)" x="-61.84 -52.75 -43.66 -34.57 -26.19 -20.94 -11.84 -3.47 1.79 10.88 19.97 29.06 37.44 42.70 51.79">TCGA-A1-0800-00</text>
<text transform="translate(348.0,720) rotate(-90) scale(0.88,1)" x="-61.84 -52.75 -43.66 -34.57 -26.19 -20.94 -11.84 -3.47 1.79 10.88 19.97 29.06 37.44 42.70 51.79">TCGA-B6-0800-00</text>
<text transform="translate(351.5,720) rotate(-90) scale(0.88,1)" x="-61.84 -52.75 -43.66 -34.57 -26.19 -20.94 -11.84 -3.47 1.79 10.88 19.97 29.06 37.44 42.70 51.79">TCGA-AO-0808-10</text>
<text transform="translate(355.5,720) rotate(-90) scale(0.88,1)" x="-61.84 -52.75 -43.66 -34.57 -26.19 -20.94 -11.84 -3.47 1.79 10.88 19.97 29.06 37.44 42.70 51.79">TCGA-D8-0808-10</text>
<text transform="translate(359.0,720) rotate(-90) scale(0.88,1)" x="-61.84 -52.75 -43.66 -34.57 -26.19 -20.94 -11.84 -3.47 1.79 10.88 19.97 29.06 37.44 42.70 51.79">TCGA-A7-0800-10</text>
<text transform="translate(363.0,720) rotate(-90) scale(0.88,1)" x="-61.84 -52.75 -43.66 -34.57 -26.19 -20.94 -11.84 -3.47 1.79 10.88 19.97 29.06 37.44 42.70 51.79">TCGA-C8-0808-10</text>
<text transform="translate(367.0,720) rotate(-90) scale(0.88,1)" x="-61.84 -52.75 -43.66 -34.57 -26.19 -20.94 -11.84 -3.47 1.79 10.88 19.97 29.06 37.44 42.70 51.79">TCGA-E2-0808-10</text>
<text transform="translate(371.0,720) rotate(-90) scale(0.88,1)" x="-61.84 -52.75 -43.66 -34.57 -26.19 -20.94 -11.84 -3.47 1.79 10.88 19.97 29.06 37.44 42.70 51.79">TCGA-A1-0808-10</text>
<text transform="translate(374.5,720) rotate(-90) scale(0.88,1)" x="-61.84 -52.75 -43.66 -34.57 -26.19 -20.94 -11.84 -3.47 1.79 10.88 19.97 29.06 37.44 42.70 51.79">TCGA-E2-0800-10</text>
<text transform="translate(378.5,720) rotate(-90) scale(0.88,1)" x="-61.84 -52.75 -43.66 -34.57 -26.19 -20.94 -11.84 -3.47 1.79 10.88 19.97 29.06 37.44 42.70 51.79">TCGA-B6-0808-10</text>
<text transform="translate(382.0,720) rotate(-90) scale(0.88,1)" x="-61.84 -52.75 -43.66 -34.57 -26.19 -20.94 -11.84 -3.47 1.79 10.88 19.97 29.06 37.44 42.70 51.79">TCGA-B6-0800-10</text>
<text transform="translate(386.0,720) rotate(-90) scale(0.88,1)" x="-61.84 -52.75 -43.66 -34.57 -26.19 -20.94 -11.84 -3.47 1.79 10.88 19.97 29.06 37.44 42.70 51.79">TCGA-A2-0800-00</text>
<text transform="translate(390.0,720) rotate(-90) scale(0.88,1)" x="-61.84 -52.75 -43.66 -34.57 -26.19 -20.94 -11.84 -3.47 1.79 10.88 19.97 29.06 37.44 42.70 51.79">TCGA-E2-0800-00</text>
<text transform="translate(394.0,720) rotate(-90) scale(0.88,1)" x="-61.84 -52.75 -43.66 -34.57 -26.19 -20.94 -11.84 -3.47 1.79 10.88 19.97 29.06 37.44 42.70 51.79">TCGA-A1-0800-00</text>
<text transform="translate(397.5,720) rotate(-90) scale(0.88,1)" x="-61.84 -52.75 -43.66 -34.57 -26.19 -20.94 -11.84 -3.47 1.79 10.88 19.97 29.06 37.44 42.70 51.79">TCGA-A2-0800-00</text>
<text transform="translate(401.5,720) rotate(-90) scale(0.88,1)" x="-61.84 -52.75 -43.66 -34.57 -26.19 -20.94 -11.84 -3.47 1.79 10.88 19.97 29.06 37.44 42.70 51.79">TCGA-BH-0800-10</text>
<text transform="translate(405.0,720) rotate(-90) scale(0.88,1)" x="-61.84 -52.75 -43.66 -34.57 -26.19 -20.94 -11.84 -3.47 1.79 10.88 19.97 29.06 37.44 42.70 51.79">TCGA-A2-0800-10</text>
<text transform="translate(409.0,720) rotate(-90) scale(0.88,1)" x="-61.84 -52.75 -43.66 -34.57 -26.19 -20.94 -11.84 -3.47 1.79 10.88 19.97 29.06 37.44 42.70 51.79">TCGA-D8-0800-10</text>
<text transform="translate(413.0,720) rotate(-90) scale(0.88,1)" x="-61.84 -52.75 -43.66 -34.57 -26.19 -20.94 -11.84 -3.47 1.79 10.88 19.97 29.06 37.44 42.70 51.79">TCGA-A2-0800-10</text>
<text transform="translate(417.0,720) rotate(-90) scale(0.88,1)" x="-61.84 -52.75 -43.66 -34.57 -26.19 -20.94 -11.84 -3.47 1.79 10.88 19.97 29.06 37.44 42.70 51.79">TCGA-D8-0800-00</text>
<text transform="translate(421.0,720) rotate(-90) scale(0.88,1)" x="-61.84 -52.75 -43.66 -34.57 -26.19 -20.94 -11.84 -3.47 1.79 10.88 19.97 29.06 37.44 42.70 51.79">TCGA-C8-0800-00</text>
<text transform="translate(424.5,720) rotate(-90) scale(0.88,1)" x="-61.84 -52.75 -43.66 -34.57 -26.19 -20.94 -11.84 -3.47 1.79 10.88 19.97 29.06 37.44 42.70 51.79">TCGA-AO-0800-00</text>
<text transform="translate(428.5,720) rotate(-90) scale(0.88,1)" x="-61.84 -52.75 -43.66 -34.57 -26.19 -20.94 -11.84 -3.47 1.79 10.88 19.97 29.06 37.44 42.70 51.79">TCGA-A1-0808-00</text>
<text transform="translate(432.0,720) rotate(-90) scale(0.88,1)" x="-61.84 -52.75 -43.66 -34.57 -26.19 -20.94 -11.84 -3.47 1.79 10.88 19.97 29.06 37.44 42.70 51.79">TCGA-A8-0800-00</text>
<text transform="translate(436.0,720) rotate(-90) scale(0.88,1)" x="-61.84 -52.75 -43.66 -34.57 -26.19 -20.94 -11.84 -3.47 1.79 10.88 19.97 29.06 37.44 42.70 51.79">TCGA-B6-0808-00</text>
<text transform="translate(440.0,720) rotate(-90) scale(0.88,1)" x="-61.84 -52.75 -43.66 -34.57 -26.19 -20.94 -11.84 -3.47 1.79 10.88 19.97 29.06 37.44 42.70 51.79">TCGA-E2-0800-00</text>
<text transform="translate(444.0,720) rotate(-90) scale(0.88,1)" x="-61.84 -52.75 -43.66 -34.57 -26.19 -20.94 -11.84 -3.47 1.79 10.88 19.97 29.06 37.44 42.70 51.79">TCGA-AO-0800-10</text>
<text transform="translate(447.5,720) rotate(-90) scale(0.88,1)" x="-61.84 -52.75 -43.66 -34.57 -26.19 -20.94 -11.84 -3.47 1.79 10.88 19.97 29.06 37.44 42.70 51.79">TCGA-AO-0808-10</text>
<text transform="translate(451.5,720) rotate(-90) scale(0.88,1)" x="-61.84 -52.75 -43.66 -34.57 -26.19 -20.94 -11.84 -3.47 1.79 10.88 19.97 29.06 37.44 42.70 51.79">TCGA-A2-0800-10</text>
<text transform="translate(455.0,720) rotate(-90) scale(0.88,1)" x="-61.84 -52.75 -43.66 -34.57 -26.19 -20.94 -11.84 -3.47 1.79 10.88 19.97 29.06 37.44 42.70 51.79">TCGA-BH-0800-10</text>
<text transform="translate(459.0,720) rotate(-90) scale(0.88,1)" x="-61.84 -52.75 -43.66 -34.57 -26.19 -20.94 -11.84 -3.47 1.79 10.88 19.97 29.06 37.44 42.70 51.79">TCGA-BH-0800-10</text>
<text transform="translate(463.0,720) rotate(-90) scale(0.88,1)" x="-61.84 -52.75 -43.66 -34.57 -26.19 -20.94 -11.84 -3.47 1.79 10.88 19.97 29.06 37.44 42.70 51.79">TCGA-AN-0800-10</text>
<text transform="translate(467.0,720) rotate(-90) scale(0.88,1)" x="-61.84 -52.75 -43.66 -34.57 -26.19 -20.94 -11.84 -3.47 1.79 10.88 19.97 29.06 37.44 42.70 51.79">TCGA-A7-0800-10</text>
<text transform="translate(470.5,720) rotate(-90) scale(0.88,1)" x="-61.84 -52.75 -43.66 -34.57 -26.19 -20.94 -11.84 -3.47 1.79 10.88 19.97 29.06 37.44 42.70 51.79">TCGA-AO-0800-10</text>
<text transform="translate(474.5,720) rotate(-90) scale(0.88,1)" x="-61.84 -52.75 -43.66 -34.57 -26.19 -20.94 -11.84 -3.47 1.79 10.88 19.97 29.06 37.44 42.70 51.79">TCGA-AN-0808-10</text>
<text transform="translate(478.0,720) rotate(-90) scale(0.88,1)" x="-61.84 -52.75 -43.66 -34.57 -26.19 -20.94 -11.84 -3.47 1.79 10.88 19.97 29.06 37.44 42.70 51.79">TCGA-A7-0800-10</text>
<text transform="translate(482.0,720) rotate(-90) scale(0.88,1)" x="-61.84 -52.75 -43.66 -34.57 -26.19 -20.94 -11.84 -3.47 1.79 10.88 19.97 29.06 37.44 42.70 51.79">TCGA-A1-0808-10</text>
<text transform="translate(486.0,720) rotate(-90) scale(0.88,1)" x="-61.84 -52.75 -43.66 -34.57 -26.19 -20.94 -11.84 -3.47 1.79 10.88 19.97 29.06 37.44 42.70 51.79">TCGA-C8-0800-10</text>
<text transform="translate(490.0,720) rotate(-90) scale(0.88,1)" x="-61.84 -52.75 -43.66 -34.57 -26.19 -20.94 -11.84 -3.47 1.79 10.88 19.97 29.06 37.44 42.70 51.79">TCGA-A7-0800-10</text>
<text transform="translate(493.5,720) rotate(-90) scale(0.88,1)" x="-61.84 -52.75 -43.66 -34.57 -26.19 -20.94 -11.84 -3.47 1.79 10.88 19.97 29.06 37.44 42.70 51.79">TCGA-AN-A01Z-00</text>
<text transform="translate(497.5,720) rotate(-90) scale(0.88,1)" x="-61.84 -52.75 -43.66 -34.57 -26.19 -20.94 -11.84 -3.47 1.79 10.88 19.97 29.06 37.44 42.70 51.79">TCGA-C8-A05G-00</text>
<text transform="translate(501.0,720) rotate(-90) scale(0.88,1)" x="-61.84 -52.75 -43.66 -34.57 -26.19 -20.94 -11.84 -3.47 1.79 10.88 19.97 29.06 37.44 42.70 51.79">TCGA-AO-A0PA-00</text>
<text transform="translate(505.0,720) rotate(-90) scale(0.88,1)" x="-61.84 -52.75 -43.66 -34.57 -26.19 -20.94 -11.84 -3.47 1.79 10.88 19.97 29.06 37.44 42.70 51.79">TCGA-AO-A0EY-00</text>
<text transform="translate(509.0,720) rotate(-90) scale(0.88,1)" x="-61.84 -52.75 -43.66 -34.57 -26.19 -20.94 -11.84 -3.47 1.79 10.88 19.97 29.06 37.44 42.70 51.79">TCGA-A8-A0EC-10</text>
<text transform="translate(513.0,720) rotate(-90) scale(0.88,1)" x="-61.84 -52.75 -43.66 -34.57 -26.19 -20.94 -11.84 -3.47 1.79 10.88 19.97 29.06 37.44 42.70 51.79">TCGA-A8-A0RE-10</text>
<text transform="translate(517.0,720) rotate(-90) scale(0.88,1)" x="-61.84 -52.75 -43.66 -34.57 -26.19 -20.94 -11.84 -3.47 1.79 10.88 19.97 29.06 37.44 42.70 51.79">TCGA-AO-A0ZX-10</text>
<text transform="translate(520.5,720) rotate(-90) scale(0.88,1)" x="-61.84 -52.75 -43.66 -34.57 -26.19 -20.94 -11.84 -3.47 1.79 10.88 19.97 29.06 37.44 42.70 51.79">TCGA-AN-A011-10</text>
<text transform="translate(524.5,720) rotate(-90) scale(0.88,1)" x="-61.84 -52.75 -43.66 -34.57 -26.19 -20.94 -11.84 -3.47 1.79 10.88 19.97 29.06 37.44 42.70 51.79">TCGA-A8-A0WG-10</text>
<text transform="translate(528.0,720) rotate(-90) scale(0.88,1)" x="-61.84 -52.75 -43.66 -34.57 -26.19 -20.94 -11.84 -3.47 1.79 10.88 19.97 29.06 37.44 42.70 51.79">TCGA-AO-A0NU-00</text>
<text transform="translate(532.0,720) rotate(-90) scale(0.88,1)" x="-61.84 -52.75 -43.66 -34.57 -26.19 -20.94 -11.84 -3.47 1.79 10.88 19.97 29.06 37.44 42.70 51.79">TCGA-A8-A0P5-00</text>
<text transform="translate(536.0,720) rotate(-90) scale(0.88,1)" x="-61.84 -52.75 -43.66 -34.57 -26.19 -20.94 -11.84 -3.47 1.79 10.88 19.97 29.06 37.44 42.70 51.79">TCGA-BH-A06E-00</text>
<text transform="translate(540.0,720) rotate(-90) scale(0.88,1)" x="-61.84 -52.75 -43.66 -34.57 -26.19 -20.94 -11.84 -3.47 1.79 10.88 19.97 29.06 37.44 42.70 51.79">TCGA-A8-A0CM-00</text>
<text transform="translate(543.5,720) rotate(-90) scale(0.88,1)" x="-61.84 -52.75 -43.66 -34.57 -26.19 -20.94 -11.84 -3.47 1.79 10.88 19.97 29.06 37.44 42.70 51.79">TCGA-BH-A0W0-10</text>
<text transform="translate(547.5,720) rotate(-90) scale(0.88,1)" x="-61.84 -52.75 -43.66 -34.57 -26.19 -20.94 -11.84 -3.47 1.79 10.88 19.97 29.06 37.44 42.70 51.79">TCGA-E2-A0N5-10</text>
<text transform="translate(551.0,720) rotate(-90) scale(0.88,1)" x="-61.84 -52.75 -43.66 -34.57 -26.19 -20.94 -11.84 -3.47 1.79 10.88 19.97 29.06 37.44 42.70 51.79">TCGA-A8-A07Q-10</text>
<text transform="translate(555.0,720) rotate(-90) scale(0.88,1)" x="-61.84 -52.75 -43.66 -34.57 -26.19 -20.94 -11.84 -3.47 1.79 10.88 19.97 29.06 37.44 42.70 51.79">TCGA-B6-A0WB-00</text>
<text transform="translate(559.0,720) rotate(-90) scale(0.88,1)" x="-61.84 -52.75 -43.66 -34.57 -26.19 -20.94 -11.84 -3.47 1.79 10.88 19.97 29.06 37.44 42.70 51.79">TCGA-B6-A0M5-00</text>
<text transform="translate(563.0,720) rotate(-90) scale(0.88,1)" x="-61.84 -52.75 -43.66 -34.57 -26.19 -20.94 -11.84 -3.47 1.79 10.88 19.97 29.06 37.44 42.70 51.79">TCGA-A2-A0VR-00</text>
<text transform="translate(566.5,720) rotate(-90) scale(0.88,1)" x="-61.84 -52.75 -43.66 -34.57 -26.19 -20.94 -11.84 -3.47 1.79 10.88 19.97 29.06 37.44 42.70 51.79">TCGA-A7-A0AA-00</text>
<text transform="translate(570.5,720) rotate(-90) scale(0.88,1)" x="-61.84 -52.75 -43.66 -34.57 -26.19 -20.94 -11.84 -3.47 1.79 10.88 19.97 29.06 37.44 42.70 51.79">TCGA-D8-A019-00</text>
<text transform="translate(574.0,720) rotate(-90) scale(0.88,1)" x="-61.84 -52.75 -43.66 -34.57 -26.19 -20.94 -11.84 -3.47 1.79 10.88 19.97 29.06 37.44 42.70 51.79">TCGA-D8-A0V9-00</text>
<text transform="translate(578.0,720) rotate(-90) scale(0.88,1)" x="-61.84 -52.75 -43.66 -34.57 -26.19 -20.94 -11.84 -3.47 1.79 10.88 19.97 29.06 37.44 42.70 51.79">TCGA-A7-A0WN-00</text>
<text transform="translate(582.0,720) rotate(-90) scale(0.88,1)" x="-61.84 -52.75 -43.66 -34.57 -26.19 -20.94 -11.84 -3.47 1.79 10.88 19.97 29.06 37.44 42.70 51.79">TCGA-A1-A081-10</text>
<text transform="translate(586.0,720) rotate(-90) scale(0.88,1)" x="-61.84 -52.75 -43.66 -34.57 -26.19 -20.94 -11.84 -3.47 1.79 10.88 19.97 29.06 37.44 42.70 51.79">TCGA-A7-A06Z-10</text>
<text transform="translate(589.5,720) rotate(-90) scale(0.88,1)" x="-61.84 -52.75 -43.66 -34.57 -26.19 -20.94 -11.84 -3.47 1.79 10.88 19.97 29.06 37.44 42.70 51.79">TCGA-A8-A0TC-10</text>
<text transform="translate(593.5,720) rotate(-90) scale(0.88,1)" x="-61.84 -52.75 -43.66 -34.57 -26.19 -20.94 -11.84 -3.47 1.79 10.88 19.97 29.06 37.44 42.70 51.79">TCGA-A8-A01G-10</text>
<text transform="translate(597.0,720) rotate(-90) scale(0.88,1)" x="-61.84 -52.75 -43.66 -34.57 -26.19 -20.94 -11.84 -3.47 1.79 10.88 19.97 29.06 37.44 42.70 51.79">TCGA-A8-A0JY-10</text>
<text transform="translate(601.0,720) rotate(-90) scale(0.88,1)" x="-61.84 -52.75 -43.66 -34.57 -26.19 -20.94 -11.84 -3.47 1.79 10.88 19.97 29.06 37.44 42.70 51.79">TCGA-C8-A0LG-10</text>
<text transform="translate(605.0,720) rotate(-90) scale(0.88,1)" x="-61.84 -52.75 -43.66 -34.57 -26.19 -20.94 -11.84 -3.47 1.79 10.88 19.97 29.06 37.44 42.70 51.79">TCGA-A1-A0S8-10</text>
<text transform="translate(609.0,720) rotate(-90) scale(0.88,1)" x="-61.84 -52.75 -43.66 -34.57 -26.19 -20.94 -11.84 -3.47 1.79 10.88 19.97 29.06 37.44 42.70 51.79">TCGA-E2-A0NV-10</text>
<text transform="translate(613.0,720) rotate(-90) scale(0.88,1)" x="-61.84 -52.75 -43.66 -34.57 -26.19 -20.94 -11.84 -3.47 1.79 10.88 19.97 29.06 37.44 42.70 51.79">TCGA-C8-A0ZS-10</text>
<text transform="translate(616.5,720) rotate(-90) scale(0.88,1)" x="-61.84 -52.75 -43.66 -34.57 -26.19 -20.94 -11.84 -3.47 1.79 10.88 19.97 29.06 37.44 42.70 51.79">TCGA-C8-A089-00</text>
<text transform="translate(620.5,720) rotate(-90) scale(0.88,1)" x="-61.84 -52.75 -43.66 -34.57 -26.19 -20.94 -11.84 -3.47 1.79 10.88 19.97 29.06 37.44 42.70 51.79">TCGA-BH-A0Y1-00</text>
<text transform="translate(624.0,720) rotate(-90) scale(0.88,1)" x="-61.84 -52.75 -43.66 -34.57 -26.19 -20.94 -11.84 -3.47 1.79 10.88 19.97 29.06 37.44 42.70 51.79">TCGA-A7-A0B0-00</text>
<text transform="translate(628.0,720) rotate(-90) scale(0.88,1)" x="-61.84 -52.75 -43.66 -34.57 -26.19 -20.94 -11.84 -3.47 1.79 10.88 19.97 29.06 37.44 42.70 51.79">TCGA-BH-A0B9-00</text>
<text transform="translate(632.0,720) rotate(-90) scale(0.88,1)" x="-61.84 -52.75 -43.66 -34.57 -26.19 -20.94 -11.84 -3.47 1.79 10.88 19.97 29.06 37.44 42.70 51.79">TCGA-AO-A073-00</text>
<text transform="translate(636.0,720) rotate(-90) scale(0.88,1)" x="-61.84 -52.75 -43.66 -34.57 -26.19 -20.94 -11.84 -3.47 1.79 10.88 19.97 29.06 37.44 42.70 51.79">TCGA-C8-A0ZZ-00</text>
<text transform="translate(639.5,720) rotate(-90) scale(0.88,1)" x="-61.84 -52.75 -43.66 -34.57 -26.19 -20.94 -11.84 -3.47 1.79 10.88 19.97 29.06 37.44 42.70 51.79">TCGA-C8-A0W6-00</text>
<text transform="translate(643.5,720) rotate(-90) scale(0.88,1)" x="-61.84 -52.75 -43.66 -34.57 -26.19 -20.94 -11.84 -3.47 1.79 10.88 19.97 29.06 37.44 42.70 51.79">TCGA-A8-A03F-00</text>
<text transform="translate(647.0,720) rotate(-90) scale(0.88,1)" x="-61.84 -52.75 -43.66 -34.57 -26.19 -20.94 -11.84 -3.47 1.79 10.88 19.97 29.06 37.44 42.70 51.79">TCGA-A2-A0H2-10</text>
<text transform="translate(651.0,720) rotate(-90) scale(0.88,1)" x="-61.84 -52.75 -43.66 -34.57 -26.19 -20.94 -11.84 -3.47 1.79 10.88 19.97 29.06 37.44 42.70 51.79">TCGA-C8-A0YU-10</text>
<text transform="translate(655.0,720) rotate(-90) scale(0.88,1)" x="-61.84 -52.75 -43.66 -34.57 -26.19 -20.94 -11.84 -3.47 1.79 10.88 19.97 29.06 37.44 42.70 51.79">TCGA-BH-0801-10</text>
<text transform="translate(659.0,720) rotate(-90) scale(0.88,1)" x="-61.84 -52.75 -43.66 -34.57 -26.19 -20.94 -11.84 -3.47 1.79 10.88 19.97 29.06 37.44 42.70 51.79">TCGA-C8-0859-10</text>
<text transform="translate(662.5,720) rotate(-90) scale(0.88,1)" x="-61.84 -52.75 -43.66 -34.57 -26.19 -20.94 -11.84 -3.47 1.79 10.88 19.97 29.06 37.44 42.70 51.79">TCGA-A8-0898-10</text>
<text transform="translate(666.5,720) rotate(-90) scale(0.88,1)" x="-61.84 -52.75 -43.66 -34.57 -26.19 -20.94 -11.84 -3.47 1.79 10.88 19.97 29.06 37.44 42.70 51.79">TCGA-C8-0847-10</text>
<text transform="translate(670.0,720) rotate(-90) scale(0.88,1)" x="-61.84 -52.75 -43.66 -34.57 -26.19 -20.94 -11.84 -3.47 1.79 10.88 19.97 29.06 37.44 42.70 51.79">TCGA-C8-0887-10</text>
<text transform="translate(674.0,720) rotate(-90) scale(0.88,1)" x="-61.84 -52.75 -43.66 -34.57 -26.19 -20.94 -11.84 -3.47 1.79 10.88 19.97 29.06 37.44 42.70 51.79">TCGA-AN-0838-10</text>
<text transform="translate(678.0,720) rotate(-90) scale(0.88,1)" x="-61.84 -52.75 -43.66 -34.57 -26.19 -20.94 -11.84 -3.47 1.79 10.88 19.97 29.06 37.44 42.70 51.79">TCGA-BH-0883-10</text>
<text transform="translate(682.0,720) rotate(-90) scale(0.88,1)" x="-61.84 -52.75 -43.66 -34.57 -26.19 -20.94 -11.84 -3.47 1.79 10.88 19.97 29.06 37.44 42.70 51.79">TCGA-A2-0826-10</text>
<text transform="translate(685.5,720) rotate(-90) scale(0.88,1)" x="-61.84 -52.75 -43.66 -34.57 -26.19 -20.94 -11.84 -3.47 1.79 10.88 19.97 29.06 37.44 42.70 51.79">TCGA-AO-0867-10</text>
<text transform="translate(689.5,720) rotate(-90) scale(0.88,1)" x="-61.84 -52.75 -43.66 -34.57 -26.19 -20.94 -11.84 -3.47 1.79 10.88 19.97 29.06 37.44 42.70 51.79">TCGA-B6-0813-10</text>
<text transform="translate(693.0,720) rotate(-90) scale(0.88,1)" x="-61.84 -52.75 -43.66 -34.57 -26.19 -20.94 -11.84 -3.47 1.79 10.88 19.97 29.06 37.44 42.70 51.79">TCGA-E2-0813-10</text>
<text transform="translate(697.0,720) rotate(-90) scale(0.88,1)" x="-61.84 -52.75 -43.66 -34.57 -26.19 -20.94 -11.84 -3.47 1.79 10.88 19.97 29.06 37.44 42.70 51.79">TCGA-A7-0841-10</text>
<text transform="translate(701.0,720) rotate(-90) scale(0.88,1)" x="-61.84 -52.75 -43.66 -34.57 -26.19 -20.94 -11.84 -3.47 1.79 10.88 19.97 29.06 37.44 42.70 51.79">TCGA-AN-0852-10</text>
<text transform="translate(705.0,720) rotate(-90) scale(0.88,1)" x="-61.84 -52.75 -43.66 -34.57 -26.19 -20.94 -11.84 -3.47 1.79 10.88 19.97 29.06 37.44 42.70 51.79">TCGA-A8-0827-10</text>
<text transform="translate(709.0,720) rotate(-90) scale(0.88,1)" x="-61.84 -52.75 -43.66 -34.57 -26.19 -20.94 -11.84 -3.47 1.79 10.88 19.97 29.06 37.44 42.70 51.79">TCGA-BH-0816-10</text>
<text transform="translate(712.5,720) rotate(-90) scale(0.88,1)" x="-61.84 -52.75 -43.66 -34.57 -26.19 -20.94 -11.84 -3.47 1.79 10.88 19.97 29.06 37.44 42.70 51.79">TCGA-A7-0823-10</text>
<text transform="translate(716.5,720) rotate(-90) scale(0.88,1)" x="-61.84 -52.75 -43.66 -34.57 -26.19 -20.94 -11.84 -3.47 1.79 10.88 19.97 29.06 37.44 42.70 51.79">TCGA-B6-0868-10</text>
<text transform="translate(720.0,720) rotate(-90) scale(0.88,1)" x="-61.84 -52.75 -43.66 -34.57 -26.19 -20.94 -11.84 -3.47 1.79 10.88 19.97 29.06 37.44 42.70 51.79">TCGA-A8-0856-10</text>
<text transform="translate(724.0,720) rotate(-90) scale(0.88,1)" x="-61.84 -52.75 -43.66 -34.57 -26.19 -20.94 -11.84 -3.47 1.79 10.88 19.97 29.06 37.44 42.70 51.79">TCGA-A2-0855-10</text>
<text transform="translate(728.0,720) rotate(-90) scale(0.88,1)" x="-61.84 -52.75 -43.66 -34.57 -26.19 -20.94 -11.84 -3.47 1.79 10.88 19.97 29.06 37.44 42.70 51.79">TCGA-AO-0850-10</text>
<text transform="translate(732.0,720) rotate(-90) scale(0.88,1)" x="-61.84 -52.75 -43.66 -34.57 -26.19 -20.94 -11.84 -3.47 1.79 10.88 19.97 29.06 37.44 42.70 51.79">TCGA-BH-0887-10</text>
<text transform="translate(735.5,720) rotate(-90) scale(0.88,1)" x="-61.84 -52.75 -43.66 -34.57 -26.19 -20.94 -11.84 -3.47 1.79 10.88 19.97 29.06 37.44 42.70 51.79">TCGA-AO-0806-10</text>
<text transform="translate(739.5,720) rotate(-90) scale(0.88,1)" x="-61.84 -52.75 -43.66 -34.57 -26.19 -20.94 -11.84 -3.47 1.79 10.88 19.97 29.06 37.44 42.70 51.79">TCGA-AN-0889-10</text>
<text transform="translate(743.0,720) rotate(-90) scale(0.88,1)" x="-61.84 -52.75 -43.66 -34.57 -26.19 -20.94 -11.84 -3.47 1.79 10.88 19.97 29.06 37.44 42.70 51.79">TCGA-A2-0881-10</text>
<text transform="translate(747.0,720) rotate(-90) scale(0.88,1)" x="-61.84 -52.75 -43.66 -34.57 -26.19 -20.94 -11.84 -3.47 1.79 10.88 19.97 29.06 37.44 42.70 51.79">TCGA-A2-0831-10</text>
<text transform="translate(751.0,720) rotate(-90) scale(0.88,1)" x="-61.84 -52.75 -43.66 -34.57 -26.19 -20.94 -11.84 -3.47 1.79 10.88 19.97 29.06 37.44 42.70 51.79">TCGA-A1-0844-10</text>
<text transform="translate(755.0,720) rotate(-90) scale(0.88,1)" x="-61.84 -52.75 -43.66 -34.57 -26.19 -20.94 -11.84 -3.47 1.79 10.88 19.97 29.06 37.44 42.70 51.79">TCGA-A7-0824-10</text>
<text transform="translate(758.5,720) rotate(-90) scale(0.88,1)" x="-61.84 -52.75 -43.66 -34.57 -26.19 -20.94 -11.84 -3.47 1.79 10.88 19.97 29.06 37.44 42.70 51.79">TCGA-B6-0864-10</text>
<text transform="translate(762.5,720) rotate(-90) scale(0.88,1)" x="-61.84 -52.75 -43.66 -34.57 -26.19 -20.94 -11.84 -3.47 1.79 10.88 19.97 29.06 37.44 42.70 51.79">TCGA-D8-0688-01</text>
<text transform="translate(766.0,720) rotate(-90) scale(0.88,1)" x="-61.84 -52.75 -43.66 -34.57 -26.19 -20.94 -11.84 -3.47 1.79 10.88 19.97 29.06 37.44 42.70 51.79">TCGA-AN-0851-01</text>
<text transform="translate(770.0,720) rotate(-90) scale(0.88,1)" x="-61.84 -52.75 -43.66 -34.57 -26.19 -20.94 -11.84 -3.47 1.79 10.88 19.97 29.06 37.44 42.70 51.79">TCGA-A2-0626-01</text>
<text transform="translate(774.0,720) rotate(-90) scale(0.88,1)" x="-61.84 -52.75 -43.66 -34.57 -26.19 -20.94 -11.84 -3.47 1.79 10.88 19.97 29.06 37.44 42.70 51.79">TCGA-AN-0801-01</text>
<text transform="translate(778.0,720) rotate(-90) scale(0.88,1)" x="-61.84 -52.75 -43.66 -34.57 -26.19 -20.94 -11.84 -3.47 1.79 10.88 19.97 29.06 37.44 42.70 51.79">TCGA-A2-0693-01</text>
<text transform="translate(781.5,720) rotate(-90) scale(0.88,1)" x="-61.84 -52.75 -43.66 -34.57 -26.19 -20.94 -11.84 -3.47 1.79 10.88 19.97 29.06 37.44 42.70 51.79">TCGA-A1-0817-01</text>
<text transform="translate(785.5,720) rotate(-90) scale(0.88,1)" x="-61.84 -52.75 -43.66 -34.57 -26.19 -20.94 -11.84 -3.47 1.79 10.88 19.97 29.06 37.44 42.70 51.79">TCGA-AN-0886-01</text>
<text transform="translate(789.0,720) rotate(-90) scale(0.88,1)" x="-61.84 -52.75 -43.66 -34.57 -26.19 -20.94 -11.84 -3.47 1.79 10.88 19.97 29.06 37.44 42.70 51.79">TCGA-C8-0920-01</text>
<text transform="translate(793.0,720) rotate(-90) scale(0.88,1)" x="-61.84 -52.75 -43.66 -34.57 -26.19 -20.94 -11.84 -3.47 1.79 10.88 19.97 29.06 37.44 42.70 51.79">TCGA-A7-0931-01</text>
<text transform="translate(797.0,720) rotate(-90) scale(0.88,1)" x="-61.84 -52.75 -43.66 -34.57 -26.19 -20.94 -11.84 -3.47 1.79 10.88 19.97 29.06 37.44 42.70 51.79">TCGA-A8-0802-01</text>
<text transform="translate(801.0,720) rotate(-90) scale(0.88,1)" x="-61.84 -52.75 -43.66 -34.57 -26.19 -20.94 -11.84 -3.47 1.79 10.88 19.97 29.06 37.44 42.70 51.79">TCGA-A8-0848-01</text>
<text transform="translate(805.0,720) rotate(-90) scale(0.88,1)" x="-61.84 -52.75 -43.66 -34.57 -26.19 -20.94 -11.84 -3.47 1.79 10.88 19.97 29.06 37.44 42.70 51.79">TCGA-E2-0878-01</text>
<text transform="translate(808.5,720) rotate(-90) scale(0.88,1)" x="-61.84 -52.75 -43.66 -34.57 -26.19 -20.94 -11.84 -3.47 1.79 10.88 19.97 29.06 37.44 42.70 51.79">TCGA-A1-0645-01</text>
<text transform="translate(812.5,720) rotate(-90) scale(0.88,1)" x="-61.84 -52.75 -43.66 -34.57 -26.19 -20.94 -11.84 -3.47 1.79 10.88 19.97 29.06 37.44 42.70 51.79">TCGA-A1-0800-01</text>
<text transform="translate(816.0,720) rotate(-90) scale(0.88,1)" x="-61.84 -52.75 -43.66 -34.57 -26.19 -20.94 -11.84 -3.47 1.79 10.88 19.97 29.06 37.44 42.70 51.79">TCGA-A8-0988-01</text>
<text transform="translate(820.0,720) rotate(-90) scale(0.88,1)" x="-61.84 -52.75 -43.66 -34.57 -26.19 -20.94 -11.84 -3.47 1.79 10.88 19.97 29.06 37.44 42.70 51.79">TCGA-BH-0973-01</text>
<text transform="translate(824.0,720) rotate(-90) scale(0.88,1)" x="-61.84 -52.75 -43.66 -34.57 -26.19 -20.94 -11.84 -3.47 1.79 10.88 19.97 29.06 37.44 42.70 51.79">TCGA-C8-0667-01</text>
<text transform="translate(828.0,720) rotate(-90) scale(0.88,1)" x="-61.84 -52.75 -43.66 -34.57 -26.19 -20.94 -11.84 -3.47 1.79 10.88 19.97 29.06 37.44 42.70 51.79">TCGA-A8-0884-01</text>
<text transform="translate(831.5,720) rotate(-90) scale(0.88,1)" x="-61.84 -52.75 -43.66 -34.57 -26.19 -20.94 -11.84 -3.47 1.79 10.88 19.97 29.06 37.44 42.70 51.79">TCGA-E2-0653-01</text>
<text transform="translate(835.5,720) rotate(-90) scale(0.88,1)" x="-61.84 -52.75 -43.66 -34.57 -26.19 -20.94 -11.84 -3.47 1.79 10.88 19.97 29.06 37.44 42.70 51.79">TCGA-A1-0665-01</text>
<text transform="translate(839.0,720) rotate(-90) scale(0.88,1)" x="-61.84 -52.75 -43.66 -34.57 -26.19 -20.94 -11.84 -3.47 1.79 10.88 19.97 29.06 37.44 42.70 51.79">TCGA-E2-0601-01</text>
<text transform="translate(843.0,720) rotate(-90) scale(0.88,1)" x="-61.84 -52.75 -43.66 -34.57 -26.19 -20.94 -11.84 -3.47 1.79 10.88 19.97 29.06 37.44 42.70 51.79">TCGA-A7-0946-01</text>
<text transform="translate(847.0,720) rotate(-90) scale(0.88,1)" x="-61.84 -52.75 -43.66 -34.57 -26.19 -20.94 -11.84 -3.47 1.79 10.88 19.97 29.06 37.44 42.70 51.79">TCGA-C8-0616-00</text>
<text transform="translate(851.0,720) rotate(-90) scale(0.88,1)" x="-61.84 -52.75 -43.66 -34.57 -26.19 -20.94 -11.84 -3.47 1.79 10.88 19.97 29.06 37.44 42.70 51.79">TCGA-A8-0949-00</text>
<text transform="translate(854.5,720) rotate(-90) scale(0.88,1)" x="-61.84 -52.75 -43.66 -34.57 -26.19 -20.94 -11.84 -3.47 1.79 10.88 19.97 29.06 37.44 42.70 51.79">TCGA-BH-0940-00</text>
<text transform="translate(858.5,720) rotate(-90) scale(0.88,1)" x="-61.84 -52.75 -43.66 -34.57 -26.19 -20.94 -11.84 -3.47 1.79 10.88 19.97 29.06 37.44 42.70 51.79">TCGA-BH-0624-00</text>
<text transform="translate(862.0,720) rotate(-90) scale(0.88,1)" x="-61.84 -52.75 -43.66 -34.57 -26.19 -20.94 -11.84 -3.47 1.79 10.88 19.97 29.06 37.44 42.70 51.79">TCGA-AO-0645-00</text>
<text transform="translate(866.0,720) rotate(-90) scale(0.88,1)" x="-61.84 -52.75 -43.66 -34.57 -26.19 -20.94 -11.84 -3.47 1.79 10.88 19.97 29.06 37.44 42.70 51.79">TCGA-A1-0953-00</text>
<text transform="translate(870.0,720) rotate(-90) scale(0.88,1)" x="-61.84 -52.75 -43.66 -34.57 -26.19 -20.94 -11.84 -3.47 1.79 10.88 19.97 29.06 37.44 42.70 51.79">TCGA-A7-0835-00</text>
<text transform="translate(874.0,720) rotate(-90) scale(0.88,1)" x="-61.84 -52.75 -43.66 -34.57 -26.19 -20.94 -11.84 -3.47 1.79 10.88 19.97 29.06 37.44 42.70 51.79">TCGA-A2-0656-00</text>
<text transform="translate(877.5,720) rotate(-90) scale(0.88,1)" x="-61.84 -52.75 -43.66 -34.57 -26.19 -20.94 -11.84 -3.47 1.79 10.88 19.97 29.06 37.44 42.70 51.79">TCGA-E2-0848-00</text>
<text transform="translate(881.5,720) rotate(-90) scale(0.88,1)" x="-61.84 -52.75 -43.66 -34.57 -26.19 -20.94 -11.84 -3.47 1.79 10.88 19.97 29.06 37.44 42.70 51.79">TCGA-A1-0638-00</text>
<text transform="translate(885.0,720) rotate(-90) scale(0.88,1)" x="-61.84 -52.75 -43.66 -34.57 -26.19 -20.94 -11.84 -3.47 1.79 10.88 19.97 29.06 37.44 42.70 51.79">TCGA-A7-A1G5-00</text>
<text transform="translate(889.0,720) rotate(-90) scale(0.88,1)" x="-61.84 -52.75 -43.66 -34.57 -26.19 -20.94 -11.84 -3.47 1.79 10.88 19.97 29.06 37.44 42.70 51.79">TCGA-A1-A62R-00</text>
<text transform="translate(893.0,720) rotate(-90) scale(0.88,1)" x="-61.84 -52.75 -43.66 -34.57 -26.19 -20.94 -11.84 -3.47 1.79 10.88 19.97 29.06 37.44 42.70 51.79">TCGA-A2-A4KE-00</text>
<text transform="translate(897.0,720) rotate(-90) scale(0.88,1)" x="-61.84 -52.75 -43.66 -34.57 -26.19 -20.94 -11.84 -3.47 1.79 10.88 19.97 29.06 37.44 42.70 51.79">TCGA-E2-A9Z9-00</text>
<text transform="translate(901.0,720) rotate(-90) scale(0.88,1)" x="-61.84 -52.75 -43.66 -34.57 -26.19 -20.94 -11.84 -3.47 1.79 10.88 19.97 29.06 37.44 42.70 51.79">TCGA-BH-A9QL-00</text>
<text transform="translate(904.5,720) rotate(-90) scale(0.88,1)" x="-61.84 -52.75 -43.66 -34.57 -26.19 -20.94 -11.84 -3.47 1.79 10.88 19.97 29.06 37.44 42.70 51.79">TCGA-A1-A2J9-01</text>
<text transform="translate(908.5,720) rotate(-90) scale(0.88,1)" x="-61.84 -52.75 -43.66 -34.57 -26.19 -20.94 -11.84 -3.47 1.79 10.88 19.97 29.06 37.44 42.70 51.79">TCGA-A7-A8TY-01</text>
<text transform="translate(912.0,720) rotate(-90) scale(0.88,1)" x="-61.84 -52.75 -43.66 -34.57 -26.19 -20.94 -11.84 -3.47 1.79 10.88 19.97 29.06 37.44 42.70 51.79">TCGA-E2-A8Y1-01</text>
<text transform="translate(916.0,720) rotate(-90) scale(0.88,1)" x="-61.84 -52.75 -43.66 -34.57 -26.19 -20.94 -11.84 -3.47 1.79 10.88 19.97 29.06 37.44 42.70 51.79">TCGA-A1-A9E5-01</text>
<text transform="translate(920.0,720) rotate(-90) scale(0.88,1)" x="-61.84 -52.75 -43.66 -34.57 -26.19 -20.94 -11.84 -3.47 1.79 10.88 19.97 29.06 37.44 42.70 51.79">TCGA-A2-A08P-01</text>
<text transform="translate(924.0,720) rotate(-90) scale(0.88,1)" x="-61.84 -52.75 -43.66 -34.57 -26.19 -20.94 -11.84 -3.47 1.79 10.88 19.97 29.06 37.44 42.70 51.79">TCGA-E2-A6U3-01</text>
<text transform="translate(927.5,720) rotate(-90) scale(0.88,1)" x="-61.84 -52.75 -43.66 -34.57 -26.19 -20.94 -11.84 -3.47 1.79 10.88 19.97 29.06 37.44 42.70 51.79">TCGA-AN-A0FX-01</text>
<text transform="translate(931.5,720) rotate(-90) scale(0.88,1)" x="-61.84 -52.75 -43.66 -34.57 -26.19 -20.94 -11.84 -3.47 1.79 10.88 19.97 29.06 37.44 42.70 51.79">TCGA-C8-A0V4-01</text>
<text transform="translate(935.0,720) rotate(-90) scale(0.88,1)" x="-61.84 -52.75 -43.66 -34.57 -26.19 -20.94 -11.84 -3.47 1.79 10.88 19.97 29.06 37.44 42.70 51.79">TCGA-A2-A85Z-00</text>
<text transform="translate(939.0,720) rotate(-90) scale(0.88,1)" x="-61.84 -52.75 -43.66 -34.57 -26.19 -20.94 -11.84 -3.47 1.79 10.88 19.97 29.06 37.44 42.70 51.79">TCGA-AN-A7G4-00</text>
<text transform="translate(943.0,720) rotate(-90) scale(0.88,1)" x="-61.84 -52.75 -43.66 -34.57 -26.19 -20.94 -11.84 -3.47 1.79 10.88 19.97 29.06 37.44 42.70 51.79">TCGA-E2-A3DE-00</text>
</g>
</svg></body></html>
